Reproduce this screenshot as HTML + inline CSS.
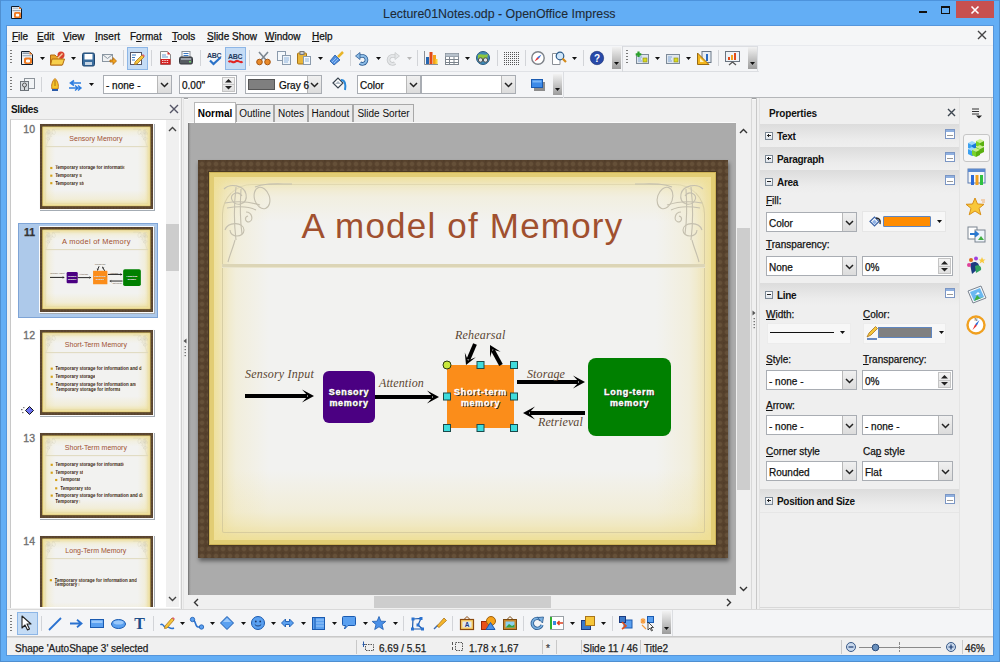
<!DOCTYPE html><html><head><meta charset="utf-8"><style>
html,body{margin:0;padding:0;width:1000px;height:662px;overflow:hidden;font-family:"Liberation Sans",sans-serif}
.a{position:absolute}
.t{white-space:nowrap;line-height:1;-webkit-text-stroke:0.25px currentColor}
svg.a{overflow:visible}
</style></head><body>
<div class="a " style="left:0px;top:0px;width:1000px;height:662px;background:#63aef5"></div>
<div class="a " style="left:0px;top:0px;width:1000px;height:1px;background:#4d93dc"></div>
<div class="a " style="left:0px;top:0px;width:1px;height:662px;background:#4f8fd0"></div>
<div class="a " style="left:999px;top:0px;width:1px;height:662px;background:#4f8fd0"></div>
<div class="a " style="left:0px;top:661px;width:1000px;height:1px;background:#4f8fd0"></div>
<div class="a " style="left:6px;top:25px;width:988px;height:631px;background:#5596dc"></div>
<svg class="a" style="left:11px;top:6px;" width="11" height="13" viewBox="0 0 11 13"><path d="M0.5 0.5 H8 L10.5 3 V12.5 H0.5 Z" fill="#eef2f6" stroke="#0e1a2a" stroke-width="1"/><rect x="1.5" y="1.5" width="6" height="1.5" fill="#b8c4d0"/><rect x="1.5" y="4" width="8" height="1.2" fill="#9aa8b8"/><path d="M8 0.5 L10.5 3 H8Z" fill="#f07b22"/><rect x="3" y="6" width="7" height="6" rx="1.5" fill="#f07b22"/><rect x="4.8" y="7.7" width="3.4" height="2.8" rx="1" fill="#fff"/></svg>
<div class="a t " style="left:383px;top:7.7px;font-size:12.4px;color:#1e2a36;-webkit-text-stroke:0.1px currentColor">Lecture01Notes.odp - OpenOffice Impress</div>
<div class="a " style="left:919px;top:11px;width:8px;height:2px;background:#111"></div>
<div class="a " style="left:941px;top:6px;width:9px;height:8px;border:1px solid #111;border-top-width:2px;box-sizing:border-box"></div>
<div class="a " style="left:956px;top:1px;width:38px;height:17px;background:#c75050"></div>
<svg class="a" style="left:970px;top:4px;" width="10" height="11" viewBox="0 0 10 11"><path d="M1.5 2.5 L8.5 9.5 M8.5 2.5 L1.5 9.5" stroke="#fff" stroke-width="1.6"/></svg>
<div class="a " style="left:7px;top:26px;width:986px;height:629px;background:#f0f0f0"></div>
<div class="a " style="left:7px;top:26px;width:986px;height:19px;background:#f5f6f7"></div>
<div class="a t " style="left:12px;top:32px;font-size:10px;color:#111;"><u>F</u>ile</div>
<div class="a t " style="left:37px;top:32px;font-size:10px;color:#111;"><u>E</u>dit</div>
<div class="a t " style="left:63px;top:32px;font-size:10px;color:#111;"><u>V</u>iew</div>
<div class="a t " style="left:95px;top:32px;font-size:10px;color:#111;"><u>I</u>nsert</div>
<div class="a t " style="left:130px;top:32px;font-size:10px;color:#111;">F<u>o</u>rmat</div>
<div class="a t " style="left:172px;top:32px;font-size:10px;color:#111;"><u>T</u>ools</div>
<div class="a t " style="left:207px;top:32px;font-size:10px;color:#111;"><u>S</u>lide Show</div>
<div class="a t " style="left:265px;top:32px;font-size:10px;color:#111;"><u>W</u>indow</div>
<div class="a t " style="left:312px;top:32px;font-size:10px;color:#111;"><u>H</u>elp</div>
<svg class="a" style="left:977px;top:30px;" width="10" height="10" viewBox="0 0 10 10"><path d="M1 1 L9 9 M9 1 L1 9" stroke="#444" stroke-width="1.4"/></svg>
<div class="a " style="left:7px;top:45px;width:986px;height:53px;background:#f4f5f7"></div>
<div class="a " style="left:7px;top:71px;width:752px;height:1px;background:#e0e2e6"></div>
<div class="a " style="left:7px;top:45px;width:986px;height:1px;background:#e8eaee"></div>
<div class="a " style="left:7px;top:97px;width:986px;height:1px;background:#b4b6b9"></div>
<div class="a " style="left:7px;top:98px;width:986px;height:1px;background:#a0a2a5"></div>
<div class="a " style="left:7px;top:99px;width:986px;height:1px;background:#fbfbfb"></div>
<div class="a" style="left:10px;top:50px;width:2px;height:1px;background:#7a7a7a"></div><div class="a" style="left:10px;top:53px;width:2px;height:1px;background:#7a7a7a"></div><div class="a" style="left:10px;top:56px;width:2px;height:1px;background:#7a7a7a"></div><div class="a" style="left:10px;top:59px;width:2px;height:1px;background:#7a7a7a"></div><div class="a" style="left:10px;top:62px;width:2px;height:1px;background:#7a7a7a"></div>
<svg class="a" style="left:40px;top:57px" width="5" height="3" viewBox="0 0 5 3"><path d="M0 0 H5 L2.5 3 Z" fill="#111"/></svg>
<svg class="a" style="left:71px;top:57px" width="5" height="3" viewBox="0 0 5 3"><path d="M0 0 H5 L2.5 3 Z" fill="#111"/></svg>
<div class="a" style="left:123px;top:50px;width:1px;height:16px;background:#d2d4d8"></div>
<div class="a" style="left:127px;top:47px;width:21px;height:23px;background:#c5dcf5;border:1px solid #8db6e6;box-sizing:border-box"></div>
<div class="a" style="left:151px;top:50px;width:1px;height:16px;background:#d2d4d8"></div>
<div class="a" style="left:200px;top:50px;width:1px;height:16px;background:#d2d4d8"></div>
<div class="a" style="left:225px;top:47px;width:21px;height:23px;background:#c5dcf5;border:1px solid #8db6e6;box-sizing:border-box"></div>
<div class="a" style="left:249px;top:50px;width:1px;height:16px;background:#d2d4d8"></div>
<svg class="a" style="left:318px;top:57px" width="5" height="3" viewBox="0 0 5 3"><path d="M0 0 H5 L2.5 3 Z" fill="#111"/></svg>
<div class="a" style="left:350px;top:50px;width:1px;height:16px;background:#d2d4d8"></div>
<svg class="a" style="left:376px;top:57px" width="5" height="3" viewBox="0 0 5 3"><path d="M0 0 H5 L2.5 3 Z" fill="#111"/></svg>
<svg class="a" style="left:407px;top:57px" width="5" height="3" viewBox="0 0 5 3"><path d="M0 0 H5 L2.5 3 Z" fill="#b8b8b8"/></svg>
<div class="a" style="left:417px;top:50px;width:1px;height:16px;background:#d2d4d8"></div>
<svg class="a" style="left:465px;top:57px" width="5" height="3" viewBox="0 0 5 3"><path d="M0 0 H5 L2.5 3 Z" fill="#111"/></svg>
<div class="a" style="left:497px;top:50px;width:1px;height:16px;background:#d2d4d8"></div>
<div class="a" style="left:525px;top:50px;width:1px;height:16px;background:#d2d4d8"></div>
<svg class="a" style="left:572px;top:57px" width="5" height="3" viewBox="0 0 5 3"><path d="M0 0 H5 L2.5 3 Z" fill="#111"/></svg>
<div class="a" style="left:583px;top:50px;width:1px;height:16px;background:#d2d4d8"></div>
<svg class="a" style="left:21px;top:51px" width="16" height="16" viewBox="0 0 16 16"><path d="M0.5 0.5 H8.5 L11.5 3.5 V13.5 H0.5 Z" fill="#eef2f6" stroke="#14202e" stroke-width="1"/><rect x="1.5" y="1.5" width="7" height="1.5" fill="#8e9cac"/><rect x="1.5" y="4" width="9" height="1.3" fill="#a8b4c0"/><path d="M8.5 0.5 L11.5 3.5 H8.5Z" fill="#f07b22"/><rect x="3" y="6.5" width="8" height="6.5" rx="1.8" fill="#f07b22"/><rect x="5" y="8.4" width="4" height="3" rx="1.2" fill="#fff"/></svg>
<svg class="a" style="left:50px;top:51px" width="16" height="16" viewBox="0 0 16 16"><path d="M0.5 4 H5 L6.5 5.5 H12 V14 H0.5 Z" fill="#e8a52a" stroke="#b36b12" stroke-width="1"/><path d="M2 8 H14.5 L12.5 14 H0.5 Z" fill="#f7cf4c" stroke="#b36b12" stroke-width="1"/><circle cx="11" cy="4" r="3.5" fill="#d9412e"/><path d="M8 7 L12.5 2.5" stroke="#f5d0a0" stroke-width="1.5"/></svg>
<svg class="a" style="left:82px;top:52px" width="16" height="16" viewBox="0 0 16 16"><rect x="0.5" y="1" width="12" height="13" rx="1.5" fill="#3a6d9e" stroke="#1f4670"/><rect x="2.5" y="2" width="8" height="5.5" fill="#fff"/><rect x="3" y="10" width="7" height="3" fill="#c8d6e4"/></svg>
<svg class="a" style="left:102px;top:52px" width="16" height="16" viewBox="0 0 16 16"><rect x="0.5" y="2.5" width="10" height="7" fill="#eef0f2" stroke="#8a96a2"/><path d="M0.5 2.5 L5.5 6.5 L10.5 2.5" fill="none" stroke="#8a96a2"/><path d="M8 8 H11 V5.5 L14.5 9 L11 12.5 V10 H8 Z" fill="#f2a21c" stroke="#b06a10" stroke-width="0.8"/></svg>
<svg class="a" style="left:130px;top:51px" width="16" height="16" viewBox="0 0 16 16"><rect x="0.5" y="1.5" width="11" height="12" fill="#fff" stroke="#556" stroke-width="1"/><path d="M2 4 H6 M2 6.5 H5 M2 9 H5" stroke="#3a78c2" stroke-width="1"/><path d="M5 11 L12 4 L14 6 L7 13 L4.5 13.5 Z" fill="#f6c63a" stroke="#a9741a" stroke-width="0.8"/><path d="M12 4 L13 3 L15 5 L14 6 Z" fill="#e06070"/></svg>
<svg class="a" style="left:160px;top:51px" width="16" height="16" viewBox="0 0 16 16"><path d="M0.5 0.5 H7.5 L10.5 3.5 V13.5 H0.5 Z" fill="#fafafa" stroke="#8a8a8a"/><path d="M2 4 H6 M2 6 H8" stroke="#6b9bd0" stroke-width="1"/><rect x="0.5" y="8" width="10" height="5.5" fill="#d42020"/><path d="M2 9.5 H9 M2 11.5 H9" stroke="#fff" stroke-width="0.8" stroke-dasharray="1.5 0.8"/><path d="M7.5 0.5 L10.5 3.5 H7.5Z" fill="#e03030"/></svg>
<svg class="a" style="left:179px;top:51px" width="16" height="16" viewBox="0 0 16 16"><rect x="3" y="0.5" width="8" height="6" fill="#fff" stroke="#8a8f96"/><path d="M4.5 2.5 H9.5 M4.5 4.5 H9.5" stroke="#3a78c2"/><rect x="0.5" y="6" width="13" height="7" rx="1.5" fill="#565b62" stroke="#33373c"/><rect x="2" y="7" width="10" height="2" fill="#9aa0a8"/><rect x="10" y="10" width="2" height="1.5" fill="#6fd06a"/></svg>
<svg class="a" style="left:207px;top:51px" width="16" height="16" viewBox="0 0 16 16"><text x="0" y="6.5" font-family="Liberation Sans" font-weight="bold" font-size="7" fill="#1f3a60" letter-spacing="-0.3">ABC</text><path d="M3 9.5 L6.5 13 L13.5 6.5" fill="none" stroke="#2a72c8" stroke-width="2.2"/></svg>
<svg class="a" style="left:228px;top:50px" width="16" height="16" viewBox="0 0 16 16"><text x="0" y="8.5" font-family="Liberation Sans" font-weight="bold" font-size="7" fill="#1f3a60" letter-spacing="-0.3">ABC</text><path d="M0.5 12 C 3 9.5, 5 14, 7.5 11.5 C 10 9, 12 14, 14.5 11.5" fill="none" stroke="#e02424" stroke-width="2"/></svg>
<svg class="a" style="left:256px;top:51px" width="16" height="16" viewBox="0 0 16 16"><path d="M3 1 L10 9 M12 1 L5 9" stroke="#7c8690" stroke-width="1.6"/><circle cx="3.5" cy="11" r="2.8" fill="#e98a2a" stroke="#a65612"/><circle cx="11.5" cy="11" r="2.8" fill="#e98a2a" stroke="#a65612"/></svg>
<svg class="a" style="left:277px;top:51px" width="16" height="16" viewBox="0 0 16 16"><rect x="0.5" y="0.5" width="8" height="9" fill="#f4f8fc" stroke="#8a9aac"/><rect x="5.5" y="4.5" width="8" height="9" fill="#eef4fa" stroke="#8a9aac"/><path d="M7 7 H12 M7 9 H12 M7 11 H11" stroke="#7aa6d6" stroke-width="0.8"/></svg>
<svg class="a" style="left:297px;top:51px" width="16" height="16" viewBox="0 0 16 16"><rect x="0.5" y="2" width="9" height="11" rx="1" fill="#e9b53a" stroke="#a77418"/><rect x="3" y="0.5" width="4" height="3" fill="#c8ccd2" stroke="#777"/><rect x="6.5" y="5.5" width="7" height="8" fill="#f4f8fc" stroke="#8a9aac"/><path d="M8 8 H12 M8 10 H12" stroke="#7aa6d6" stroke-width="0.8"/></svg>
<svg class="a" style="left:329px;top:51px" width="16" height="16" viewBox="0 0 16 16"><path d="M9 6 L14 1" stroke="#e8b52a" stroke-width="2.5"/><path d="M1 10 L6 4 L11 9 L5 14 Z" fill="#4f8ee0" stroke="#245aa0" stroke-width="0.8"/><path d="M3 11 L7 7 M5 12 L9 8" stroke="#a8cdf5" stroke-width="0.8"/></svg>
<svg class="a" style="left:355px;top:52px" width="16" height="16" viewBox="0 0 16 16"><path d="M4 4 H8.5 A 4 4 0 1 1 5 11" fill="none" stroke="#2e5d94" stroke-width="3.6"/><path d="M4 4 H8.5 A 4 4 0 1 1 5 11" fill="none" stroke="#8cbce6" stroke-width="2"/><path d="M0.5 4 L5 0.5 V7.5 Z" fill="#8cbce6" stroke="#2e5d94" stroke-width="0.8"/></svg>
<svg class="a" style="left:386px;top:52px" width="16" height="16" viewBox="0 0 16 16"><path d="M10 4 H5.5 A 4 4 0 1 0 9 11" fill="none" stroke="#c8cacc" stroke-width="3.6"/><path d="M10 4 H5.5 A 4 4 0 1 0 9 11" fill="none" stroke="#e4e6e8" stroke-width="2"/><path d="M13.5 4 L9 0.5 V7.5 Z" fill="#e4e6e8" stroke="#c8cacc" stroke-width="0.8"/></svg>
<svg class="a" style="left:424px;top:51px" width="16" height="16" viewBox="0 0 16 16"><path d="M0.5 0 V13.5 H14" fill="none" stroke="#8a8f96"/><rect x="2" y="6" width="3" height="7" fill="#2566b0"/><rect x="5.5" y="1" width="3" height="12" fill="#e24a1a"/><rect x="9" y="4" width="3" height="9" fill="#f5a21a"/><rect x="11.5" y="8" width="2" height="5" fill="#f6d43a"/></svg>
<svg class="a" style="left:445px;top:53px" width="16" height="16" viewBox="0 0 16 16"><rect x="0.5" y="0.5" width="13" height="11" fill="#fff" stroke="#7d858e"/><path d="M0.5 3.5 H13.5 M0.5 6.5 H13.5 M0.5 9.5 H13.5 M4.5 0.5 V11.5 M9 0.5 V11.5" stroke="#7d858e"/><rect x="0.5" y="0.5" width="13" height="3" fill="#b8c2cc"/></svg>
<svg class="a" style="left:476px;top:51px" width="16" height="16" viewBox="0 0 16 16"><circle cx="7" cy="7" r="6.5" fill="#3f8bb8" stroke="#2a5a80"/><path d="M2 4 C 5 2, 8 5, 12 3 L 11 8 C 8 9, 5 7, 2 9 Z" fill="#8cc63e"/><circle cx="4.5" cy="9" r="2.2" fill="#dfe4e8" stroke="#444" stroke-width="0.9"/><circle cx="9.5" cy="9" r="2.2" fill="#dfe4e8" stroke="#444" stroke-width="0.9"/></svg>
<svg class="a" style="left:503px;top:51px" width="16" height="16" viewBox="0 0 16 16"><rect x="1" y="1" width="1" height="1" fill="#555"/><rect x="1" y="3" width="1" height="1" fill="#555"/><rect x="1" y="5" width="1" height="1" fill="#555"/><rect x="1" y="7" width="1" height="1" fill="#555"/><rect x="1" y="9" width="1" height="1" fill="#555"/><rect x="1" y="11" width="1" height="1" fill="#555"/><rect x="1" y="13" width="1" height="1" fill="#555"/><rect x="3" y="1" width="1" height="1" fill="#555"/><rect x="3" y="3" width="1" height="1" fill="#555"/><rect x="3" y="5" width="1" height="1" fill="#555"/><rect x="3" y="7" width="1" height="1" fill="#555"/><rect x="3" y="9" width="1" height="1" fill="#555"/><rect x="3" y="11" width="1" height="1" fill="#555"/><rect x="3" y="13" width="1" height="1" fill="#555"/><rect x="5" y="1" width="1" height="1" fill="#555"/><rect x="5" y="3" width="1" height="1" fill="#555"/><rect x="5" y="5" width="1" height="1" fill="#555"/><rect x="5" y="7" width="1" height="1" fill="#555"/><rect x="5" y="9" width="1" height="1" fill="#555"/><rect x="5" y="11" width="1" height="1" fill="#555"/><rect x="5" y="13" width="1" height="1" fill="#555"/><rect x="7" y="1" width="1" height="1" fill="#555"/><rect x="7" y="3" width="1" height="1" fill="#555"/><rect x="7" y="5" width="1" height="1" fill="#555"/><rect x="7" y="7" width="1" height="1" fill="#555"/><rect x="7" y="9" width="1" height="1" fill="#555"/><rect x="7" y="11" width="1" height="1" fill="#555"/><rect x="7" y="13" width="1" height="1" fill="#555"/><rect x="9" y="1" width="1" height="1" fill="#555"/><rect x="9" y="3" width="1" height="1" fill="#555"/><rect x="9" y="5" width="1" height="1" fill="#555"/><rect x="9" y="7" width="1" height="1" fill="#555"/><rect x="9" y="9" width="1" height="1" fill="#555"/><rect x="9" y="11" width="1" height="1" fill="#555"/><rect x="9" y="13" width="1" height="1" fill="#555"/><rect x="11" y="1" width="1" height="1" fill="#555"/><rect x="11" y="3" width="1" height="1" fill="#555"/><rect x="11" y="5" width="1" height="1" fill="#555"/><rect x="11" y="7" width="1" height="1" fill="#555"/><rect x="11" y="9" width="1" height="1" fill="#555"/><rect x="11" y="11" width="1" height="1" fill="#555"/><rect x="11" y="13" width="1" height="1" fill="#555"/><rect x="13" y="1" width="1" height="1" fill="#555"/><rect x="13" y="3" width="1" height="1" fill="#555"/><rect x="13" y="5" width="1" height="1" fill="#555"/><rect x="13" y="7" width="1" height="1" fill="#555"/><rect x="13" y="9" width="1" height="1" fill="#555"/><rect x="13" y="11" width="1" height="1" fill="#555"/><rect x="13" y="13" width="1" height="1" fill="#555"/><rect x="15" y="1" width="1" height="1" fill="#555"/><rect x="15" y="3" width="1" height="1" fill="#555"/><rect x="15" y="5" width="1" height="1" fill="#555"/><rect x="15" y="7" width="1" height="1" fill="#555"/><rect x="15" y="9" width="1" height="1" fill="#555"/><rect x="15" y="11" width="1" height="1" fill="#555"/><rect x="15" y="13" width="1" height="1" fill="#555"/></svg>
<svg class="a" style="left:531px;top:51px" width="16" height="16" viewBox="0 0 16 16"><circle cx="7" cy="7" r="6.2" fill="#fff" stroke="#7d8288" stroke-width="1.4"/><path d="M10.5 3.5 L7.8 7.8 L6.2 6.2 Z" fill="#3a6ed8"/><path d="M3.5 10.5 L6.2 6.2 L7.8 7.8 Z" fill="#e83030"/></svg>
<svg class="a" style="left:552px;top:51px" width="16" height="16" viewBox="0 0 16 16"><path d="M0.5 2.5 H6 L8 4.5 V13.5 H0.5 Z" fill="#fff" stroke="#8a8f96"/><circle cx="8" cy="5" r="3.8" fill="#cfe6fa" stroke="#2a5a8a" stroke-width="1.2"/><path d="M10.5 7.5 L14 11" stroke="#d48a1a" stroke-width="2.2"/></svg>
<svg class="a" style="left:590px;top:51px" width="16" height="16" viewBox="0 0 16 16"><circle cx="7" cy="7" r="6.7" fill="#2849a8" stroke="#1a2e70" stroke-width="0.6"/><text x="7" y="11" text-anchor="middle" font-family="Liberation Sans" font-weight="bold" font-size="10" fill="#fff">?</text></svg>
<div class="a" style="left:612px;top:47px;width:9px;height:22px;background:linear-gradient(#f2f2f2,#9c9c9c)"></div><svg class="a" style="left:614px;top:62px" width="5" height="3" viewBox="0 0 5 3"><path d="M0 0 H5 L2.5 3 Z" fill="#111"/></svg>
<div class="a " style="left:622px;top:46px;width:1px;height:26px;background:#d6d8dc"></div>
<div class="a " style="left:623px;top:46px;width:135px;height:26px;border:1px solid #dcdee2;border-left:none;box-sizing:border-box"></div>
<div class="a" style="left:626px;top:50px;width:2px;height:1px;background:#7a7a7a"></div><div class="a" style="left:626px;top:53px;width:2px;height:1px;background:#7a7a7a"></div><div class="a" style="left:626px;top:56px;width:2px;height:1px;background:#7a7a7a"></div><div class="a" style="left:626px;top:59px;width:2px;height:1px;background:#7a7a7a"></div><div class="a" style="left:626px;top:62px;width:2px;height:1px;background:#7a7a7a"></div>
<svg class="a" style="left:635px;top:51px" width="16" height="16" viewBox="0 0 16 16"><rect x="1.5" y="3.5" width="12" height="9" fill="#dfe6ee" stroke="#7d8a98"/><path d="M3 6 H7 M3 8 H6 M3 10 H7" stroke="#6a9ad0" stroke-width="0.8"/><rect x="8" y="7" width="4" height="4" fill="#d8d820" stroke="#8a8a10" stroke-width="0.6"/><path d="M3.5 0.5 V6 M0.7 3.3 H6.3" stroke="#2aa02a" stroke-width="2.2"/></svg>
<svg class="a" style="left:666px;top:52px" width="16" height="16" viewBox="0 0 16 16"><rect x="0.5" y="2.5" width="13" height="9" fill="#dfe6ee" stroke="#7d8a98"/><path d="M2 5 H6 M2 7 H5 M2 9 H6" stroke="#6a9ad0" stroke-width="0.8"/><rect x="8" y="6" width="4" height="4" fill="#d8d820" stroke="#8a8a10" stroke-width="0.6"/></svg>
<svg class="a" style="left:697px;top:51px" width="16" height="16" viewBox="0 0 16 16"><rect x="5" y="0.5" width="9" height="11" fill="#e8eef4" stroke="#6a7888"/><rect x="9" y="3" width="2" height="7" fill="#2a6ac0"/><path d="M0.5 2 L0.5 13.5 L12 13.5 Z" fill="#f3b61c" stroke="#9a6a10"/><path d="M3 7 L3 11 L7 11 Z" fill="#fff3c0"/></svg>
<svg class="a" style="left:725px;top:51px" width="16" height="16" viewBox="0 0 16 16"><rect x="0.5" y="0.5" width="14" height="10" fill="#eef2f6" stroke="#6a7480"/><rect x="3" y="6" width="2" height="3" fill="#e24a1a"/><rect x="6" y="4" width="2" height="5" fill="#f5a21a"/><rect x="9" y="2" width="2" height="7" fill="#e24a1a"/><path d="M7.5 11 L4 14 M7.5 11 L11 14" stroke="#555" stroke-width="1.2"/></svg>
<svg class="a" style="left:655px;top:57px" width="5" height="3" viewBox="0 0 5 3"><path d="M0 0 H5 L2.5 3 Z" fill="#111"/></svg>
<svg class="a" style="left:686px;top:57px" width="5" height="3" viewBox="0 0 5 3"><path d="M0 0 H5 L2.5 3 Z" fill="#111"/></svg>
<div class="a" style="left:718px;top:50px;width:1px;height:16px;background:#d2d4d8"></div>
<div class="a" style="left:748px;top:47px;width:9px;height:22px;background:linear-gradient(#f2f2f2,#9c9c9c)"></div><svg class="a" style="left:750px;top:62px" width="5" height="3" viewBox="0 0 5 3"><path d="M0 0 H5 L2.5 3 Z" fill="#111"/></svg>
<div class="a" style="left:10px;top:77px;width:2px;height:1px;background:#7a7a7a"></div><div class="a" style="left:10px;top:80px;width:2px;height:1px;background:#7a7a7a"></div><div class="a" style="left:10px;top:83px;width:2px;height:1px;background:#7a7a7a"></div><div class="a" style="left:10px;top:86px;width:2px;height:1px;background:#7a7a7a"></div><div class="a" style="left:10px;top:89px;width:2px;height:1px;background:#7a7a7a"></div>
<svg class="a" style="left:20px;top:78px" width="16" height="16" viewBox="0 0 16 16"><rect x="4.5" y="0.5" width="10" height="10" fill="#f2f4f6" stroke="#8d939a"/><rect x="0.5" y="3.5" width="8" height="9" fill="#d6dade" stroke="#6e747a"/><circle cx="4.5" cy="7" r="2" fill="none" stroke="#555"/><path d="M4.5 9 V12" stroke="#555"/></svg>
<div class="a" style="left:41px;top:77px;width:1px;height:15px;background:#d2d4d8"></div>
<svg class="a" style="left:51px;top:78px" width="16" height="16" viewBox="0 0 16 16"><path d="M4 0.5 C 7 3, 8 8, 7 11 H1 C 0 8, 1 3, 4 0.5 Z" fill="#f4c52a" stroke="#c06a10" stroke-width="0.9"/><path d="M4 2 V8" stroke="#a05a10" stroke-width="0.8"/><rect x="1" y="11" width="6" height="2" fill="#2a5aa8"/></svg>
<svg class="a" style="left:69px;top:80px" width="16" height="16" viewBox="0 0 16 16"><path d="M12 3 H2 M5 0.5 L1.5 3 L5 5.5" fill="none" stroke="#2d7de0" stroke-width="1.6"/><path d="M0 8 H12 M9 5.5 L12 8 L9 10.5 M6 5.5 L9 8 L6 10.5" fill="none" stroke="#2d7de0" stroke-width="1.4"/></svg>
<svg class="a" style="left:89px;top:83px" width="5" height="3" viewBox="0 0 5 3"><path d="M0 0 H5 L2.5 3 Z" fill="#111"/></svg>
<div class="a " style="left:103px;top:75px;width:69px;height:19px;background:#fff;border:1px solid #a9adb3;box-sizing:border-box"></div>
<div class="a " style="left:157px;top:76px;width:14px;height:17px;background:linear-gradient(#f0f0f0,#dcdcdc);border-left:1px solid #b8b8b8;box-sizing:border-box"></div>
<svg class="a" style="left:160px;top:82px" width="9" height="6" viewBox="0 0 9 6"><path d="M1 1 L4.5 4.5 L8 1" fill="none" stroke="#222" stroke-width="1.5"/></svg>
<div class="a t " style="left:106px;top:81px;font-size:10px;color:#111;">- none -</div>
<div class="a " style="left:179px;top:75px;width:58px;height:19px;background:#fff;border:1px solid #a9adb3;box-sizing:border-box"></div>
<div class="a " style="left:222px;top:77px;width:13px;height:15px;background:linear-gradient(#f4f4f4,#e0e0e0);border:1px solid #c4c4c4;box-sizing:border-box"></div>
<div class="a " style="left:223px;top:84px;width:11px;height:1px;background:#c4c4c4"></div>
<svg class="a" style="left:225px;top:79px" width="7" height="4" viewBox="0 0 7 4"><path d="M0 3.5 L3.5 0 L7 3.5 Z" fill="#222"/></svg>
<svg class="a" style="left:225px;top:86px" width="7" height="4" viewBox="0 0 7 4"><path d="M0 0 L7 0 L3.5 3.5 Z" fill="#222"/></svg>
<div class="a t " style="left:182px;top:81px;font-size:10px;color:#111">0.00&quot;</div>
<div class="a " style="left:245px;top:75px;width:77px;height:19px;background:#fff;border:1px solid #a9adb3;box-sizing:border-box"></div>
<div class="a " style="left:307px;top:76px;width:14px;height:17px;background:linear-gradient(#f0f0f0,#dcdcdc);border-left:1px solid #b8b8b8;box-sizing:border-box"></div>
<svg class="a" style="left:310px;top:82px" width="9" height="6" viewBox="0 0 9 6"><path d="M1 1 L4.5 4.5 L8 1" fill="none" stroke="#222" stroke-width="1.5"/></svg>
<div class="a " style="left:248px;top:79px;width:27px;height:11px;background:#7f7f7f;border:1px solid #555;box-sizing:border-box"></div>
<div class="a t " style="left:279px;top:81px;font-size:10px;color:#111">Gray 6</div>
<svg class="a" style="left:332px;top:77px" width="16" height="16" viewBox="0 0 16 16"><path d="M1 6 L6 1 L11 6 L6 11 Z" fill="#fff" stroke="#394450" stroke-width="1.2"/><path d="M3 7 L6 4 L9 7" fill="#b0bac4"/><path d="M9 3 C 13 3, 14 7, 13 13" fill="none" stroke="#2a88d8" stroke-width="2"/></svg>
<div class="a " style="left:357px;top:75px;width:64px;height:19px;background:#fff;border:1px solid #a9adb3;box-sizing:border-box"></div>
<div class="a " style="left:406px;top:76px;width:14px;height:17px;background:linear-gradient(#f0f0f0,#dcdcdc);border-left:1px solid #b8b8b8;box-sizing:border-box"></div>
<svg class="a" style="left:409px;top:82px" width="9" height="6" viewBox="0 0 9 6"><path d="M1 1 L4.5 4.5 L8 1" fill="none" stroke="#222" stroke-width="1.5"/></svg>
<div class="a t " style="left:360px;top:81px;font-size:10px;color:#111;">Color</div>
<div class="a " style="left:421px;top:75px;width:95px;height:19px;background:#fff;border:1px solid #a9adb3;box-sizing:border-box"></div>
<div class="a " style="left:501px;top:76px;width:14px;height:17px;background:linear-gradient(#f0f0f0,#dcdcdc);border-left:1px solid #b8b8b8;box-sizing:border-box"></div>
<svg class="a" style="left:504px;top:82px" width="9" height="6" viewBox="0 0 9 6"><path d="M1 1 L4.5 4.5 L8 1" fill="none" stroke="#222" stroke-width="1.5"/></svg>
<svg class="a" style="left:531px;top:79px" width="16" height="16" viewBox="0 0 16 16"><rect x="3" y="3" width="11" height="9" fill="#8c8c8c"/><rect x="0.5" y="0.5" width="11" height="8" fill="#3c8ae8" stroke="#1a5ab0"/><rect x="1.5" y="1.5" width="9" height="2" fill="#7ab6f6"/></svg>
<div class="a" style="left:553px;top:74px;width:9px;height:21px;background:linear-gradient(#f2f2f2,#9c9c9c)"></div><svg class="a" style="left:555px;top:88px" width="5" height="3" viewBox="0 0 5 3"><path d="M0 0 H5 L2.5 3 Z" fill="#111"/></svg>
<div class="a " style="left:563px;top:72px;width:1px;height:26px;background:#dcdee2"></div>
<div class="a " style="left:7px;top:98px;width:176px;height:511px;background:#f0f0f0"></div>
<div class="a t " style="left:11px;top:104.7px;font-size:10px;font-weight:bold;color:#111;-webkit-text-stroke:0;letter-spacing:-0.4px">Slides</div>
<svg class="a" style="left:169px;top:104px;" width="10" height="10" viewBox="0 0 10 10"><path d="M1 1 L9 9 M9 1 L1 9" stroke="#556" stroke-width="1.4"/></svg>
<div class="a " style="left:10px;top:119px;width:170px;height:489px;background:#fff;border-left:1px solid #c8c8c8;border-top:1px solid #d8d8d8;box-sizing:border-box"></div>
<div class="a " style="left:166px;top:120px;width:13px;height:487px;background:#f0f0f0"></div>
<div class="a " style="left:166px;top:224px;width:13px;height:47px;background:#cdcdcd"></div>
<svg class="a" style="left:168px;top:126px;" width="9" height="6" viewBox="0 0 9 6"><path d="M1 5 L4.5 1.5 L8 5" stroke="#444" stroke-width="1.4" fill="none"/></svg>
<svg class="a" style="left:168px;top:596px;" width="9" height="6" viewBox="0 0 9 6"><path d="M1 1 L4.5 4.5 L8 1" stroke="#444" stroke-width="1.4" fill="none"/></svg>
<div class="a" style="left:10px;top:120px;width:156px;height:487px;overflow:hidden"><div class="a" style="left:-10px;top:-120px;width:200px;height:700px"><div class="a t" style="left:20px;top:123.5px;font-size:10.5px;-webkit-text-stroke:0.35px #707070;color:#707070;width:15px;text-align:right">10</div><div class="a" style="left:40px;top:124px;width:115px;height:87px;background:#a4acb4"></div><div class="a" style="left:39px;top:123px;width:115px;height:87px;background:#fbfbfb"></div><div class="a" style="left:40px;top:124px;width:113px;height:85px;overflow:hidden"><div style="position:absolute;left:0;top:0;width:530px;height:398px;transform:scale(0.2132,0.2136);transform-origin:0 0"><div style="position:absolute;left:0;top:0;width:530px;height:398px;background-color:#56412c;background-image:radial-gradient(circle at 4px 4px,#655039 1.5px,rgba(0,0,0,0) 3px),radial-gradient(circle at 0 0,#503d29 1.5px,rgba(0,0,0,0) 2.5px);background-size:7px 7px;"></div><div style="position:absolute;left:11px;top:12px;width:507px;height:373px;background:#cfb458;box-shadow:0 0 0 1px #4a3922;"></div><div style="position:absolute;left:12px;top:13px;width:505px;height:371px;background:#e2cd74;"></div><div style="position:absolute;left:16px;top:17px;width:497px;height:363px;background-color:#f2f2f0;background-image:linear-gradient(to top,rgba(238,222,148,0.8),rgba(240,226,160,0.3) 28px,rgba(240,226,160,0) 70px),linear-gradient(to right,rgba(238,222,148,0.7),rgba(240,226,160,0.25) 22px,rgba(240,226,160,0) 55px),linear-gradient(to left,rgba(238,222,148,0.7),rgba(240,226,160,0.25) 22px,rgba(240,226,160,0) 55px),linear-gradient(to bottom,rgba(238,222,148,0.6),rgba(240,226,160,0.2) 20px,rgba(240,226,160,0) 45px);box-shadow:inset 0 0 10px 3px rgba(238,222,148,0.85)"></div><div style="position:absolute;left:24px;top:24px;width:483px;height:349px;border:1px solid rgba(200,190,150,0.6);border-top-color:rgba(200,190,150,0.35);border-radius:30px 30px 2px 2px;box-sizing:border-box"></div><div style="position:absolute;left:24px;top:104px;width:483px;height:3px;background:#dcd5b6;border-bottom:1px solid #e9e4cc"></div><svg style="position:absolute;left:0;top:0" width="530" height="398" viewBox="0 0 530 398"><g transform="translate(24,24)"><g fill="none" stroke="#c4bfae" stroke-width="1.1"><ellipse cx="40" cy="14" rx="7.5" ry="11" transform="rotate(-18 40 14)"/><path d="M2 5 C 8 -1, 22 1, 24 10 C 26 20, 14 24, 10 16 C 7 10, 16 6, 20 12"/><path d="M3 19 C 14 17, 26 17, 38 21"/><path d="M5 24 C 16 22, 26 22, 34 26"/><path d="M14 3 C 12 20, 12 40, 14 56"/><path d="M19 5 C 18 20, 18 36, 20 50"/><path d="M3 46 C 6 37, 22 38, 22 46 C 22 54, 8 54, 8 46"/><path d="M13 56 C 11 64, 8 70, 6 78"/><path d="M24 28 C 30 28, 32 36, 27 38 C 23 38, 22 33, 26 32"/><path d="M33 3 C 42 -1, 52 0, 70 0"/></g></g><g transform="translate(507,24) scale(-1,1)"><g fill="none" stroke="#c4bfae" stroke-width="1.1"><ellipse cx="40" cy="14" rx="7.5" ry="11" transform="rotate(-18 40 14)"/><path d="M2 5 C 8 -1, 22 1, 24 10 C 26 20, 14 24, 10 16 C 7 10, 16 6, 20 12"/><path d="M3 19 C 14 17, 26 17, 38 21"/><path d="M5 24 C 16 22, 26 22, 34 26"/><path d="M14 3 C 12 20, 12 40, 14 56"/><path d="M19 5 C 18 20, 18 36, 20 50"/><path d="M3 46 C 6 37, 22 38, 22 46 C 22 54, 8 54, 8 46"/><path d="M13 56 C 11 64, 8 70, 6 78"/><path d="M24 28 C 30 28, 32 36, 27 38 C 23 38, 22 33, 26 32"/><path d="M33 3 C 42 -1, 52 0, 70 0"/></g></g></svg><div style="position:absolute;left:136.0px;top:50px;width:252px;text-align:center;font-family:'Liberation Sans',sans-serif;font-size:33px;line-height:1;color:#a0502f;white-space:nowrap">Sensory Memory</div><div style="position:absolute;left:71px;top:194px;width:325px;height:24px;overflow:hidden;font-family:'Liberation Sans',sans-serif;font-weight:bold;font-size:21px;line-height:24px;color:#3a2812;white-space:nowrap">Temporary storage for information and data in the working memory system of the brain used for </div><div style="position:absolute;left:48px;top:201px;width:10px;height:10px;background:#d4a017"></div><div style="position:absolute;left:71px;top:230px;width:126px;height:24px;overflow:hidden;font-family:'Liberation Sans',sans-serif;font-weight:bold;font-size:21px;line-height:24px;color:#3a2812;white-space:nowrap">Temporary storage for information and data in the working memory system of the brain used for </div><div style="position:absolute;left:48px;top:237px;width:10px;height:10px;background:#d4a017"></div><div style="position:absolute;left:71px;top:265px;width:135px;height:24px;overflow:hidden;font-family:'Liberation Sans',sans-serif;font-weight:bold;font-size:21px;line-height:24px;color:#3a2812;white-space:nowrap">Temporary storage for information and data in the working memory system of the brain used for </div><div style="position:absolute;left:48px;top:272px;width:10px;height:10px;background:#d4a017"></div></div></div><div class="a" style="left:18px;top:223px;width:140px;height:95px;background:#adc9ea;border:1px solid #7ea4d6;box-sizing:border-box"></div><div class="a t" style="left:20px;top:226.5px;font-size:10.5px;font-weight:bold;color:#333;width:15px;text-align:right">11</div><div class="a" style="left:40px;top:227px;width:115px;height:87px;background:#a4acb4"></div><div class="a" style="left:39px;top:226px;width:115px;height:87px;background:#fbfbfb"></div><div class="a" style="left:40px;top:227px;width:113px;height:85px;overflow:hidden"><div style="position:absolute;left:0;top:0;width:530px;height:398px;transform:scale(0.2132,0.2136);transform-origin:0 0"><div style="position:absolute;left:0;top:0;width:530px;height:398px;background-color:#56412c;background-image:radial-gradient(circle at 4px 4px,#655039 1.5px,rgba(0,0,0,0) 3px),radial-gradient(circle at 0 0,#503d29 1.5px,rgba(0,0,0,0) 2.5px);background-size:7px 7px;"></div><div style="position:absolute;left:11px;top:12px;width:507px;height:373px;background:#cfb458;box-shadow:0 0 0 1px #4a3922;"></div><div style="position:absolute;left:12px;top:13px;width:505px;height:371px;background:#e2cd74;"></div><div style="position:absolute;left:16px;top:17px;width:497px;height:363px;background-color:#f2f2f0;background-image:linear-gradient(to top,rgba(238,222,148,0.8),rgba(240,226,160,0.3) 28px,rgba(240,226,160,0) 70px),linear-gradient(to right,rgba(238,222,148,0.7),rgba(240,226,160,0.25) 22px,rgba(240,226,160,0) 55px),linear-gradient(to left,rgba(238,222,148,0.7),rgba(240,226,160,0.25) 22px,rgba(240,226,160,0) 55px),linear-gradient(to bottom,rgba(238,222,148,0.6),rgba(240,226,160,0.2) 20px,rgba(240,226,160,0) 45px);box-shadow:inset 0 0 10px 3px rgba(238,222,148,0.85)"></div><div style="position:absolute;left:24px;top:24px;width:483px;height:349px;border:1px solid rgba(200,190,150,0.6);border-top-color:rgba(200,190,150,0.35);border-radius:30px 30px 2px 2px;box-sizing:border-box"></div><div style="position:absolute;left:24px;top:104px;width:483px;height:3px;background:#dcd5b6;border-bottom:1px solid #e9e4cc"></div><svg style="position:absolute;left:0;top:0" width="530" height="398" viewBox="0 0 530 398"><g transform="translate(24,24)"><g fill="none" stroke="#c4bfae" stroke-width="1.1"><ellipse cx="40" cy="14" rx="7.5" ry="11" transform="rotate(-18 40 14)"/><path d="M2 5 C 8 -1, 22 1, 24 10 C 26 20, 14 24, 10 16 C 7 10, 16 6, 20 12"/><path d="M3 19 C 14 17, 26 17, 38 21"/><path d="M5 24 C 16 22, 26 22, 34 26"/><path d="M14 3 C 12 20, 12 40, 14 56"/><path d="M19 5 C 18 20, 18 36, 20 50"/><path d="M3 46 C 6 37, 22 38, 22 46 C 22 54, 8 54, 8 46"/><path d="M13 56 C 11 64, 8 70, 6 78"/><path d="M24 28 C 30 28, 32 36, 27 38 C 23 38, 22 33, 26 32"/><path d="M33 3 C 42 -1, 52 0, 70 0"/></g></g><g transform="translate(507,24) scale(-1,1)"><g fill="none" stroke="#c4bfae" stroke-width="1.1"><ellipse cx="40" cy="14" rx="7.5" ry="11" transform="rotate(-18 40 14)"/><path d="M2 5 C 8 -1, 22 1, 24 10 C 26 20, 14 24, 10 16 C 7 10, 16 6, 20 12"/><path d="M3 19 C 14 17, 26 17, 38 21"/><path d="M5 24 C 16 22, 26 22, 34 26"/><path d="M14 3 C 12 20, 12 40, 14 56"/><path d="M19 5 C 18 20, 18 36, 20 50"/><path d="M3 46 C 6 37, 22 38, 22 46 C 22 54, 8 54, 8 46"/><path d="M13 56 C 11 64, 8 70, 6 78"/><path d="M24 28 C 30 28, 32 36, 27 38 C 23 38, 22 33, 26 32"/><path d="M33 3 C 42 -1, 52 0, 70 0"/></g></g></svg><div style="position:absolute;left:103.5px;top:48.3px;font-family:'Liberation Sans',sans-serif;font-size:35px;line-height:1;color:#a0502f;white-space:nowrap;letter-spacing:1.2px">A model of Memory</div><svg style="position:absolute;left:0;top:0;overflow:visible" width="530" height="398" viewBox="0 0 530 398"><rect x="125" y="211" width="52" height="52" rx="6" fill="#4b0082"/><rect x="249" y="205" width="67" height="63" fill="#fb8d1a"/><rect x="390" y="198" width="83" height="78" rx="8" fill="#008000"/><line x1="47" y1="236" x2="109.0" y2="236.0" stroke="#000" stroke-width="4"/><polygon points="116.0,236.0 104.0,242.5 110.0,236.0 104.0,229.5" fill="#000"/><line x1="177" y1="237" x2="234.0" y2="237.0" stroke="#000" stroke-width="4"/><polygon points="241.0,237.0 229.0,243.5 235.0,237.0 229.0,230.5" fill="#000"/><line x1="319" y1="222" x2="380.0" y2="222.0" stroke="#000" stroke-width="4"/><polygon points="387.0,222.0 375.0,228.5 381.0,222.0 375.0,215.5" fill="#000"/><line x1="387" y1="253" x2="332.0" y2="253.0" stroke="#000" stroke-width="4"/><polygon points="325.0,253.0 337.0,246.5 331.0,253.0 337.0,259.5" fill="#000"/><line x1="277" y1="184" x2="270.4" y2="199.5" stroke="#000" stroke-width="4"/><polygon points="268.0,205.0 266.8,192.5 270.0,200.4 277.8,197.3" fill="#000"/><line x1="303" y1="205" x2="294.9" y2="190.3" stroke="#000" stroke-width="4"/><polygon points="292.0,185.0 302.6,191.7 294.4,189.4 292.0,197.5" fill="#000"/></svg><div style="position:absolute;font-family:'Liberation Serif',serif;font-style:italic;font-size:12px;line-height:1;color:#5a4632;white-space:nowrap;left:47px;top:207.5px;letter-spacing:0.2px">Sensory Input</div><div style="position:absolute;font-family:'Liberation Serif',serif;font-style:italic;font-size:12px;line-height:1;color:#5a4632;white-space:nowrap;left:181px;top:217px;letter-spacing:0.1px">Attention</div><div style="position:absolute;font-family:'Liberation Serif',serif;font-style:italic;font-size:12px;line-height:1;color:#5a4632;white-space:nowrap;left:257px;top:169px;letter-spacing:0.2px">Rehearsal</div><div style="position:absolute;font-family:'Liberation Serif',serif;font-style:italic;font-size:12px;line-height:1;color:#5a4632;white-space:nowrap;left:329px;top:208.3px;letter-spacing:0.1px">Storage</div><div style="position:absolute;font-family:'Liberation Serif',serif;font-style:italic;font-size:12px;line-height:1;color:#5a4632;white-space:nowrap;left:340px;top:256px;letter-spacing:0.1px">Retrieval</div><div style="position:absolute;font-family:'Liberation Sans',sans-serif;font-weight:bold;font-size:9px;line-height:11px;color:#fff;white-space:nowrap;text-align:center;letter-spacing:0.7px;text-shadow:1px 1px 0 #222;-webkit-text-stroke:0.35px #fff;left:111px;width:80px;top:227px">Sensory<br>memory</div><div style="position:absolute;font-family:'Liberation Sans',sans-serif;font-weight:bold;font-size:9px;line-height:11px;color:#fff;white-space:nowrap;text-align:center;letter-spacing:0.7px;text-shadow:1px 1px 0 #222;-webkit-text-stroke:0.35px #fff;left:242.5px;width:80px;top:227px">Short-term<br>memory</div><div style="position:absolute;font-family:'Liberation Sans',sans-serif;font-weight:bold;font-size:9px;line-height:11px;color:#fff;white-space:nowrap;text-align:center;letter-spacing:0.7px;text-shadow:1px 1px 0 #222;-webkit-text-stroke:0.35px #fff;left:391.5px;width:80px;top:227px">Long-term<br>memory</div></div></div><div class="a t" style="left:20px;top:329.5px;font-size:10.5px;-webkit-text-stroke:0.35px #707070;color:#707070;width:15px;text-align:right">12</div><div class="a" style="left:40px;top:330px;width:115px;height:87px;background:#a4acb4"></div><div class="a" style="left:39px;top:329px;width:115px;height:87px;background:#fbfbfb"></div><div class="a" style="left:40px;top:330px;width:113px;height:85px;overflow:hidden"><div style="position:absolute;left:0;top:0;width:530px;height:398px;transform:scale(0.2132,0.2136);transform-origin:0 0"><div style="position:absolute;left:0;top:0;width:530px;height:398px;background-color:#56412c;background-image:radial-gradient(circle at 4px 4px,#655039 1.5px,rgba(0,0,0,0) 3px),radial-gradient(circle at 0 0,#503d29 1.5px,rgba(0,0,0,0) 2.5px);background-size:7px 7px;"></div><div style="position:absolute;left:11px;top:12px;width:507px;height:373px;background:#cfb458;box-shadow:0 0 0 1px #4a3922;"></div><div style="position:absolute;left:12px;top:13px;width:505px;height:371px;background:#e2cd74;"></div><div style="position:absolute;left:16px;top:17px;width:497px;height:363px;background-color:#f2f2f0;background-image:linear-gradient(to top,rgba(238,222,148,0.8),rgba(240,226,160,0.3) 28px,rgba(240,226,160,0) 70px),linear-gradient(to right,rgba(238,222,148,0.7),rgba(240,226,160,0.25) 22px,rgba(240,226,160,0) 55px),linear-gradient(to left,rgba(238,222,148,0.7),rgba(240,226,160,0.25) 22px,rgba(240,226,160,0) 55px),linear-gradient(to bottom,rgba(238,222,148,0.6),rgba(240,226,160,0.2) 20px,rgba(240,226,160,0) 45px);box-shadow:inset 0 0 10px 3px rgba(238,222,148,0.85)"></div><div style="position:absolute;left:24px;top:24px;width:483px;height:349px;border:1px solid rgba(200,190,150,0.6);border-top-color:rgba(200,190,150,0.35);border-radius:30px 30px 2px 2px;box-sizing:border-box"></div><div style="position:absolute;left:24px;top:104px;width:483px;height:3px;background:#dcd5b6;border-bottom:1px solid #e9e4cc"></div><svg style="position:absolute;left:0;top:0" width="530" height="398" viewBox="0 0 530 398"><g transform="translate(24,24)"><g fill="none" stroke="#c4bfae" stroke-width="1.1"><ellipse cx="40" cy="14" rx="7.5" ry="11" transform="rotate(-18 40 14)"/><path d="M2 5 C 8 -1, 22 1, 24 10 C 26 20, 14 24, 10 16 C 7 10, 16 6, 20 12"/><path d="M3 19 C 14 17, 26 17, 38 21"/><path d="M5 24 C 16 22, 26 22, 34 26"/><path d="M14 3 C 12 20, 12 40, 14 56"/><path d="M19 5 C 18 20, 18 36, 20 50"/><path d="M3 46 C 6 37, 22 38, 22 46 C 22 54, 8 54, 8 46"/><path d="M13 56 C 11 64, 8 70, 6 78"/><path d="M24 28 C 30 28, 32 36, 27 38 C 23 38, 22 33, 26 32"/><path d="M33 3 C 42 -1, 52 0, 70 0"/></g></g><g transform="translate(507,24) scale(-1,1)"><g fill="none" stroke="#c4bfae" stroke-width="1.1"><ellipse cx="40" cy="14" rx="7.5" ry="11" transform="rotate(-18 40 14)"/><path d="M2 5 C 8 -1, 22 1, 24 10 C 26 20, 14 24, 10 16 C 7 10, 16 6, 20 12"/><path d="M3 19 C 14 17, 26 17, 38 21"/><path d="M5 24 C 16 22, 26 22, 34 26"/><path d="M14 3 C 12 20, 12 40, 14 56"/><path d="M19 5 C 18 20, 18 36, 20 50"/><path d="M3 46 C 6 37, 22 38, 22 46 C 22 54, 8 54, 8 46"/><path d="M13 56 C 11 64, 8 70, 6 78"/><path d="M24 28 C 30 28, 32 36, 27 38 C 23 38, 22 33, 26 32"/><path d="M33 3 C 42 -1, 52 0, 70 0"/></g></g></svg><div style="position:absolute;left:111.0px;top:50px;width:302px;text-align:center;font-family:'Liberation Sans',sans-serif;font-size:33px;line-height:1;color:#a0502f;white-space:nowrap">Short-Term Memory</div><div style="position:absolute;left:72px;top:169px;width:404px;height:24px;overflow:hidden;font-family:'Liberation Sans',sans-serif;font-weight:bold;font-size:21px;line-height:24px;color:#3a2812;white-space:nowrap">Temporary storage for information and data in the working memory system of the brain used for </div><div style="position:absolute;left:50px;top:176px;width:10px;height:10px;background:#d4a017"></div><div style="position:absolute;left:72px;top:207px;width:186px;height:24px;overflow:hidden;font-family:'Liberation Sans',sans-serif;font-weight:bold;font-size:21px;line-height:24px;color:#3a2812;white-space:nowrap">Temporary storage for information and data in the working memory system of the brain used for </div><div style="position:absolute;left:50px;top:214px;width:10px;height:10px;background:#d4a017"></div><div style="position:absolute;left:72px;top:242px;width:377px;height:24px;overflow:hidden;font-family:'Liberation Sans',sans-serif;font-weight:bold;font-size:21px;line-height:24px;color:#3a2812;white-space:nowrap">Temporary storage for information and data in the working memory system of the brain used for </div><div style="position:absolute;left:50px;top:249px;width:10px;height:10px;background:#d4a017"></div><div style="position:absolute;left:74px;top:267px;width:302px;height:24px;overflow:hidden;font-family:'Liberation Sans',sans-serif;font-weight:bold;font-size:21px;line-height:24px;color:#3a2812;white-space:nowrap">Temporary storage for information and data in the working memory system of the brain used for </div></div></div><svg class="a" style="left:19px;top:405px" width="16" height="11" viewBox="0 0 16 11"><path d="M10.5 1.5 L14.5 5.5 L10.5 9.5 L6.5 5.5 Z" fill="#6a70f0" stroke="#111" stroke-width="1"/><rect x="2" y="4" width="1.5" height="1.2" fill="#666"/><rect x="4" y="2" width="1.5" height="1.2" fill="#888"/><rect x="3" y="7" width="1.5" height="1.2" fill="#777"/></svg><div class="a t" style="left:20px;top:432.5px;font-size:10.5px;-webkit-text-stroke:0.35px #707070;color:#707070;width:15px;text-align:right">13</div><div class="a" style="left:40px;top:433px;width:115px;height:87px;background:#a4acb4"></div><div class="a" style="left:39px;top:432px;width:115px;height:87px;background:#fbfbfb"></div><div class="a" style="left:40px;top:433px;width:113px;height:85px;overflow:hidden"><div style="position:absolute;left:0;top:0;width:530px;height:398px;transform:scale(0.2132,0.2136);transform-origin:0 0"><div style="position:absolute;left:0;top:0;width:530px;height:398px;background-color:#56412c;background-image:radial-gradient(circle at 4px 4px,#655039 1.5px,rgba(0,0,0,0) 3px),radial-gradient(circle at 0 0,#503d29 1.5px,rgba(0,0,0,0) 2.5px);background-size:7px 7px;"></div><div style="position:absolute;left:11px;top:12px;width:507px;height:373px;background:#cfb458;box-shadow:0 0 0 1px #4a3922;"></div><div style="position:absolute;left:12px;top:13px;width:505px;height:371px;background:#e2cd74;"></div><div style="position:absolute;left:16px;top:17px;width:497px;height:363px;background-color:#f2f2f0;background-image:linear-gradient(to top,rgba(238,222,148,0.8),rgba(240,226,160,0.3) 28px,rgba(240,226,160,0) 70px),linear-gradient(to right,rgba(238,222,148,0.7),rgba(240,226,160,0.25) 22px,rgba(240,226,160,0) 55px),linear-gradient(to left,rgba(238,222,148,0.7),rgba(240,226,160,0.25) 22px,rgba(240,226,160,0) 55px),linear-gradient(to bottom,rgba(238,222,148,0.6),rgba(240,226,160,0.2) 20px,rgba(240,226,160,0) 45px);box-shadow:inset 0 0 10px 3px rgba(238,222,148,0.85)"></div><div style="position:absolute;left:24px;top:24px;width:483px;height:349px;border:1px solid rgba(200,190,150,0.6);border-top-color:rgba(200,190,150,0.35);border-radius:30px 30px 2px 2px;box-sizing:border-box"></div><div style="position:absolute;left:24px;top:104px;width:483px;height:3px;background:#dcd5b6;border-bottom:1px solid #e9e4cc"></div><svg style="position:absolute;left:0;top:0" width="530" height="398" viewBox="0 0 530 398"><g transform="translate(24,24)"><g fill="none" stroke="#c4bfae" stroke-width="1.1"><ellipse cx="40" cy="14" rx="7.5" ry="11" transform="rotate(-18 40 14)"/><path d="M2 5 C 8 -1, 22 1, 24 10 C 26 20, 14 24, 10 16 C 7 10, 16 6, 20 12"/><path d="M3 19 C 14 17, 26 17, 38 21"/><path d="M5 24 C 16 22, 26 22, 34 26"/><path d="M14 3 C 12 20, 12 40, 14 56"/><path d="M19 5 C 18 20, 18 36, 20 50"/><path d="M3 46 C 6 37, 22 38, 22 46 C 22 54, 8 54, 8 46"/><path d="M13 56 C 11 64, 8 70, 6 78"/><path d="M24 28 C 30 28, 32 36, 27 38 C 23 38, 22 33, 26 32"/><path d="M33 3 C 42 -1, 52 0, 70 0"/></g></g><g transform="translate(507,24) scale(-1,1)"><g fill="none" stroke="#c4bfae" stroke-width="1.1"><ellipse cx="40" cy="14" rx="7.5" ry="11" transform="rotate(-18 40 14)"/><path d="M2 5 C 8 -1, 22 1, 24 10 C 26 20, 14 24, 10 16 C 7 10, 16 6, 20 12"/><path d="M3 19 C 14 17, 26 17, 38 21"/><path d="M5 24 C 16 22, 26 22, 34 26"/><path d="M14 3 C 12 20, 12 40, 14 56"/><path d="M19 5 C 18 20, 18 36, 20 50"/><path d="M3 46 C 6 37, 22 38, 22 46 C 22 54, 8 54, 8 46"/><path d="M13 56 C 11 64, 8 70, 6 78"/><path d="M24 28 C 30 28, 32 36, 27 38 C 23 38, 22 33, 26 32"/><path d="M33 3 C 42 -1, 52 0, 70 0"/></g></g></svg><div style="position:absolute;left:112.0px;top:50px;width:300px;text-align:center;font-family:'Liberation Sans',sans-serif;font-size:33px;line-height:1;color:#a0502f;white-space:nowrap">Short-Term memory</div><div style="position:absolute;left:72px;top:137px;width:321px;height:24px;overflow:hidden;font-family:'Liberation Sans',sans-serif;font-weight:bold;font-size:21px;line-height:24px;color:#3a2812;white-space:nowrap">Temporary storage for information and data in the working memory system of the brain used for </div><div style="position:absolute;left:50px;top:144px;width:10px;height:10px;background:#d4a017"></div><div style="position:absolute;left:72px;top:174px;width:130px;height:24px;overflow:hidden;font-family:'Liberation Sans',sans-serif;font-weight:bold;font-size:21px;line-height:24px;color:#3a2812;white-space:nowrap">Temporary storage for information and data in the working memory system of the brain used for </div><div style="position:absolute;left:50px;top:181px;width:10px;height:10px;background:#d4a017"></div><div style="position:absolute;left:95px;top:208px;width:93px;height:24px;overflow:hidden;font-family:'Liberation Sans',sans-serif;font-weight:bold;font-size:21px;line-height:24px;color:#3a2812;white-space:nowrap">Temporary storage for information and data in the working memory system of the brain used for </div><div style="position:absolute;left:71px;top:215px;width:10px;height:10px;background:#d4a017"></div><div style="position:absolute;left:95px;top:247px;width:144px;height:24px;overflow:hidden;font-family:'Liberation Sans',sans-serif;font-weight:bold;font-size:21px;line-height:24px;color:#3a2812;white-space:nowrap">Temporary storage for information and data in the working memory system of the brain used for </div><div style="position:absolute;left:71px;top:254px;width:10px;height:10px;background:#d4a017"></div><div style="position:absolute;left:72px;top:281px;width:409px;height:24px;overflow:hidden;font-family:'Liberation Sans',sans-serif;font-weight:bold;font-size:21px;line-height:24px;color:#3a2812;white-space:nowrap">Temporary storage for information and data in the working memory system of the brain used for </div><div style="position:absolute;left:50px;top:288px;width:10px;height:10px;background:#d4a017"></div><div style="position:absolute;left:72px;top:307px;width:116px;height:24px;overflow:hidden;font-family:'Liberation Sans',sans-serif;font-weight:bold;font-size:21px;line-height:24px;color:#3a2812;white-space:nowrap">Temporary storage for information and data in the working memory system of the brain used for </div></div></div><div class="a t" style="left:20px;top:535.5px;font-size:10.5px;-webkit-text-stroke:0.35px #707070;color:#707070;width:15px;text-align:right">14</div><div class="a" style="left:40px;top:536px;width:115px;height:87px;background:#a4acb4"></div><div class="a" style="left:39px;top:535px;width:115px;height:87px;background:#fbfbfb"></div><div class="a" style="left:40px;top:536px;width:113px;height:85px;overflow:hidden"><div style="position:absolute;left:0;top:0;width:530px;height:398px;transform:scale(0.2132,0.2136);transform-origin:0 0"><div style="position:absolute;left:0;top:0;width:530px;height:398px;background-color:#56412c;background-image:radial-gradient(circle at 4px 4px,#655039 1.5px,rgba(0,0,0,0) 3px),radial-gradient(circle at 0 0,#503d29 1.5px,rgba(0,0,0,0) 2.5px);background-size:7px 7px;"></div><div style="position:absolute;left:11px;top:12px;width:507px;height:373px;background:#cfb458;box-shadow:0 0 0 1px #4a3922;"></div><div style="position:absolute;left:12px;top:13px;width:505px;height:371px;background:#e2cd74;"></div><div style="position:absolute;left:16px;top:17px;width:497px;height:363px;background-color:#f2f2f0;background-image:linear-gradient(to top,rgba(238,222,148,0.8),rgba(240,226,160,0.3) 28px,rgba(240,226,160,0) 70px),linear-gradient(to right,rgba(238,222,148,0.7),rgba(240,226,160,0.25) 22px,rgba(240,226,160,0) 55px),linear-gradient(to left,rgba(238,222,148,0.7),rgba(240,226,160,0.25) 22px,rgba(240,226,160,0) 55px),linear-gradient(to bottom,rgba(238,222,148,0.6),rgba(240,226,160,0.2) 20px,rgba(240,226,160,0) 45px);box-shadow:inset 0 0 10px 3px rgba(238,222,148,0.85)"></div><div style="position:absolute;left:24px;top:24px;width:483px;height:349px;border:1px solid rgba(200,190,150,0.6);border-top-color:rgba(200,190,150,0.35);border-radius:30px 30px 2px 2px;box-sizing:border-box"></div><div style="position:absolute;left:24px;top:104px;width:483px;height:3px;background:#dcd5b6;border-bottom:1px solid #e9e4cc"></div><svg style="position:absolute;left:0;top:0" width="530" height="398" viewBox="0 0 530 398"><g transform="translate(24,24)"><g fill="none" stroke="#c4bfae" stroke-width="1.1"><ellipse cx="40" cy="14" rx="7.5" ry="11" transform="rotate(-18 40 14)"/><path d="M2 5 C 8 -1, 22 1, 24 10 C 26 20, 14 24, 10 16 C 7 10, 16 6, 20 12"/><path d="M3 19 C 14 17, 26 17, 38 21"/><path d="M5 24 C 16 22, 26 22, 34 26"/><path d="M14 3 C 12 20, 12 40, 14 56"/><path d="M19 5 C 18 20, 18 36, 20 50"/><path d="M3 46 C 6 37, 22 38, 22 46 C 22 54, 8 54, 8 46"/><path d="M13 56 C 11 64, 8 70, 6 78"/><path d="M24 28 C 30 28, 32 36, 27 38 C 23 38, 22 33, 26 32"/><path d="M33 3 C 42 -1, 52 0, 70 0"/></g></g><g transform="translate(507,24) scale(-1,1)"><g fill="none" stroke="#c4bfae" stroke-width="1.1"><ellipse cx="40" cy="14" rx="7.5" ry="11" transform="rotate(-18 40 14)"/><path d="M2 5 C 8 -1, 22 1, 24 10 C 26 20, 14 24, 10 16 C 7 10, 16 6, 20 12"/><path d="M3 19 C 14 17, 26 17, 38 21"/><path d="M5 24 C 16 22, 26 22, 34 26"/><path d="M14 3 C 12 20, 12 40, 14 56"/><path d="M19 5 C 18 20, 18 36, 20 50"/><path d="M3 46 C 6 37, 22 38, 22 46 C 22 54, 8 54, 8 46"/><path d="M13 56 C 11 64, 8 70, 6 78"/><path d="M24 28 C 30 28, 32 36, 27 38 C 23 38, 22 33, 26 32"/><path d="M33 3 C 42 -1, 52 0, 70 0"/></g></g></svg><div style="position:absolute;left:108.5px;top:50px;width:307px;text-align:center;font-family:'Liberation Sans',sans-serif;font-size:33px;line-height:1;color:#a0502f;white-space:nowrap">Long-Term Memory</div><div style="position:absolute;left:68px;top:195px;width:386px;height:24px;overflow:hidden;font-family:'Liberation Sans',sans-serif;font-weight:bold;font-size:21px;line-height:24px;color:#3a2812;white-space:nowrap">Temporary storage for information and data in the working memory system of the brain used for </div><div style="position:absolute;left:46px;top:202px;width:10px;height:10px;background:#d4a017"></div><div style="position:absolute;left:68px;top:216px;width:116px;height:24px;overflow:hidden;font-family:'Liberation Sans',sans-serif;font-weight:bold;font-size:21px;line-height:24px;color:#3a2812;white-space:nowrap">Temporary storage for information and data in the working memory system of the brain used for </div></div></div></div></div>
<div class="a " style="left:181px;top:98px;width:1px;height:511px;background:#d0d0d0"></div>
<div class="a " style="left:183px;top:98px;width:1px;height:511px;background:#e5e5e5"></div>
<svg class="a" style="left:183px;top:338px;" width="5" height="22" viewBox="0 0 5 22"><path d="M3.5 0.5 L0.5 3 L3.5 5.5 Z" fill="#555"/><rect x="1.5" y="8" width="1.5" height="1.2" fill="#777"/><rect x="1.5" y="11" width="1.5" height="1.2" fill="#777"/><rect x="1.5" y="14" width="1.5" height="1.2" fill="#777"/><rect x="1.5" y="17" width="1.5" height="1.2" fill="#777"/></svg>
<svg class="a" style="left:752px;top:310px;" width="5" height="22" viewBox="0 0 5 22"><path d="M0.5 0.5 L3.5 3 L0.5 5.5 Z" fill="#555"/><rect x="1.5" y="8" width="1.5" height="1.2" fill="#777"/><rect x="1.5" y="11" width="1.5" height="1.2" fill="#777"/><rect x="1.5" y="14" width="1.5" height="1.2" fill="#777"/><rect x="1.5" y="17" width="1.5" height="1.2" fill="#777"/></svg>
<div class="a " style="left:188px;top:98px;width:564px;height:511px;background:#f0f0f0"></div>
<div class="a " style="left:188px;top:122px;width:548px;height:473px;background:#ababab;border-left:1px solid #7c7c7c;border-top:1px solid #888;box-sizing:border-box"></div>
<div class="a " style="left:189px;top:123px;width:2px;height:472px;background:linear-gradient(90deg,#959595,#ababab)"></div>
<div class="a " style="left:188px;top:122px;width:548px;height:1px;background:#fafafa"></div>
<div class="a " style="left:194px;top:102px;width:42px;height:21px;background:#fff;border:1px solid #b8b8b8;border-bottom:none;box-sizing:border-box"></div>
<div class="a " style="left:194px;top:109px;width:42px;height:10px;text-align:center;line-height:10px;font-size:10px"><span style="font-weight:bold;color:#000">Normal</span></div>
<div class="a " style="left:236px;top:104px;width:38px;height:18px;background:#ececec;border:1px solid #a8a8a8;border-bottom:none;box-sizing:border-box"></div>
<div class="a " style="left:236px;top:109px;width:38px;height:10px;text-align:center;line-height:10px;font-size:10px"><span style="color:#111">Outline</span></div>
<div class="a " style="left:274px;top:104px;width:34px;height:18px;background:#ececec;border:1px solid #a8a8a8;border-bottom:none;box-sizing:border-box"></div>
<div class="a " style="left:274px;top:109px;width:34px;height:10px;text-align:center;line-height:10px;font-size:10px"><span style="color:#111">Notes</span></div>
<div class="a " style="left:308px;top:104px;width:45px;height:18px;background:#ececec;border:1px solid #a8a8a8;border-bottom:none;box-sizing:border-box"></div>
<div class="a " style="left:308px;top:109px;width:45px;height:10px;text-align:center;line-height:10px;font-size:10px"><span style="color:#111">Handout</span></div>
<div class="a " style="left:353px;top:104px;width:61px;height:18px;background:#ececec;border:1px solid #a8a8a8;border-bottom:none;box-sizing:border-box"></div>
<div class="a " style="left:353px;top:109px;width:61px;height:10px;text-align:center;line-height:10px;font-size:10px"><span style="color:#111">Slide Sorter</span></div>
<div class="a " style="left:198px;top:160px;width:530px;height:398px;box-shadow:1px 3px 4px rgba(0,0,0,0.45)"></div>
<div class="a" style="left:198px;top:160px;width:530px;height:398px;overflow:hidden"><div style="position:absolute;left:0;top:0;width:530px;height:398px;background-color:#56412c;background-image:radial-gradient(circle at 4px 4px,#655039 1.5px,rgba(0,0,0,0) 3px),radial-gradient(circle at 0 0,#503d29 1.5px,rgba(0,0,0,0) 2.5px);background-size:7px 7px;"></div><div style="position:absolute;left:11px;top:12px;width:507px;height:373px;background:#cfb458;box-shadow:0 0 0 1px #4a3922;"></div><div style="position:absolute;left:12px;top:13px;width:505px;height:371px;background:#e2cd74;"></div><div style="position:absolute;left:16px;top:17px;width:497px;height:363px;background-color:#f2f2f0;background-image:linear-gradient(to top,rgba(238,222,148,0.8),rgba(240,226,160,0.3) 28px,rgba(240,226,160,0) 70px),linear-gradient(to right,rgba(238,222,148,0.7),rgba(240,226,160,0.25) 22px,rgba(240,226,160,0) 55px),linear-gradient(to left,rgba(238,222,148,0.7),rgba(240,226,160,0.25) 22px,rgba(240,226,160,0) 55px),linear-gradient(to bottom,rgba(238,222,148,0.6),rgba(240,226,160,0.2) 20px,rgba(240,226,160,0) 45px);box-shadow:inset 0 0 10px 3px rgba(238,222,148,0.85)"></div><div style="position:absolute;left:24px;top:24px;width:483px;height:349px;border:1px solid rgba(200,190,150,0.6);border-top-color:rgba(200,190,150,0.35);border-radius:30px 30px 2px 2px;box-sizing:border-box"></div><div style="position:absolute;left:24px;top:104px;width:483px;height:3px;background:#dcd5b6;border-bottom:1px solid #e9e4cc"></div><svg style="position:absolute;left:0;top:0" width="530" height="398" viewBox="0 0 530 398"><g transform="translate(24,24)"><g fill="none" stroke="#c4bfae" stroke-width="1.1"><ellipse cx="40" cy="14" rx="7.5" ry="11" transform="rotate(-18 40 14)"/><path d="M2 5 C 8 -1, 22 1, 24 10 C 26 20, 14 24, 10 16 C 7 10, 16 6, 20 12"/><path d="M3 19 C 14 17, 26 17, 38 21"/><path d="M5 24 C 16 22, 26 22, 34 26"/><path d="M14 3 C 12 20, 12 40, 14 56"/><path d="M19 5 C 18 20, 18 36, 20 50"/><path d="M3 46 C 6 37, 22 38, 22 46 C 22 54, 8 54, 8 46"/><path d="M13 56 C 11 64, 8 70, 6 78"/><path d="M24 28 C 30 28, 32 36, 27 38 C 23 38, 22 33, 26 32"/><path d="M33 3 C 42 -1, 52 0, 70 0"/></g></g><g transform="translate(507,24) scale(-1,1)"><g fill="none" stroke="#c4bfae" stroke-width="1.1"><ellipse cx="40" cy="14" rx="7.5" ry="11" transform="rotate(-18 40 14)"/><path d="M2 5 C 8 -1, 22 1, 24 10 C 26 20, 14 24, 10 16 C 7 10, 16 6, 20 12"/><path d="M3 19 C 14 17, 26 17, 38 21"/><path d="M5 24 C 16 22, 26 22, 34 26"/><path d="M14 3 C 12 20, 12 40, 14 56"/><path d="M19 5 C 18 20, 18 36, 20 50"/><path d="M3 46 C 6 37, 22 38, 22 46 C 22 54, 8 54, 8 46"/><path d="M13 56 C 11 64, 8 70, 6 78"/><path d="M24 28 C 30 28, 32 36, 27 38 C 23 38, 22 33, 26 32"/><path d="M33 3 C 42 -1, 52 0, 70 0"/></g></g></svg><div style="position:absolute;left:103.5px;top:48.3px;font-family:'Liberation Sans',sans-serif;font-size:35px;line-height:1;color:#a0502f;white-space:nowrap;letter-spacing:1.2px">A model of Memory</div><svg style="position:absolute;left:0;top:0;overflow:visible" width="530" height="398" viewBox="0 0 530 398"><rect x="125" y="211" width="52" height="52" rx="6" fill="#4b0082"/><rect x="249" y="205" width="67" height="63" fill="#fb8d1a"/><rect x="390" y="198" width="83" height="78" rx="8" fill="#008000"/><line x1="47" y1="236" x2="109.0" y2="236.0" stroke="#000" stroke-width="4"/><polygon points="116.0,236.0 104.0,242.5 110.0,236.0 104.0,229.5" fill="#000"/><line x1="177" y1="237" x2="234.0" y2="237.0" stroke="#000" stroke-width="4"/><polygon points="241.0,237.0 229.0,243.5 235.0,237.0 229.0,230.5" fill="#000"/><line x1="319" y1="222" x2="380.0" y2="222.0" stroke="#000" stroke-width="4"/><polygon points="387.0,222.0 375.0,228.5 381.0,222.0 375.0,215.5" fill="#000"/><line x1="387" y1="253" x2="332.0" y2="253.0" stroke="#000" stroke-width="4"/><polygon points="325.0,253.0 337.0,246.5 331.0,253.0 337.0,259.5" fill="#000"/><line x1="277" y1="184" x2="270.4" y2="199.5" stroke="#000" stroke-width="4"/><polygon points="268.0,205.0 266.8,192.5 270.0,200.4 277.8,197.3" fill="#000"/><line x1="303" y1="205" x2="294.9" y2="190.3" stroke="#000" stroke-width="4"/><polygon points="292.0,185.0 302.6,191.7 294.4,189.4 292.0,197.5" fill="#000"/></svg><div style="position:absolute;font-family:'Liberation Serif',serif;font-style:italic;font-size:12px;line-height:1;color:#5a4632;white-space:nowrap;left:47px;top:207.5px;letter-spacing:0.2px">Sensory Input</div><div style="position:absolute;font-family:'Liberation Serif',serif;font-style:italic;font-size:12px;line-height:1;color:#5a4632;white-space:nowrap;left:181px;top:217px;letter-spacing:0.1px">Attention</div><div style="position:absolute;font-family:'Liberation Serif',serif;font-style:italic;font-size:12px;line-height:1;color:#5a4632;white-space:nowrap;left:257px;top:169px;letter-spacing:0.2px">Rehearsal</div><div style="position:absolute;font-family:'Liberation Serif',serif;font-style:italic;font-size:12px;line-height:1;color:#5a4632;white-space:nowrap;left:329px;top:208.3px;letter-spacing:0.1px">Storage</div><div style="position:absolute;font-family:'Liberation Serif',serif;font-style:italic;font-size:12px;line-height:1;color:#5a4632;white-space:nowrap;left:340px;top:256px;letter-spacing:0.1px">Retrieval</div><div style="position:absolute;font-family:'Liberation Sans',sans-serif;font-weight:bold;font-size:9px;line-height:11px;color:#fff;white-space:nowrap;text-align:center;letter-spacing:0.7px;text-shadow:1px 1px 0 #222;-webkit-text-stroke:0.35px #fff;left:111px;width:80px;top:227px">Sensory<br>memory</div><div style="position:absolute;font-family:'Liberation Sans',sans-serif;font-weight:bold;font-size:9px;line-height:11px;color:#fff;white-space:nowrap;text-align:center;letter-spacing:0.7px;text-shadow:1px 1px 0 #222;-webkit-text-stroke:0.35px #fff;left:242.5px;width:80px;top:227px">Short-term<br>memory</div><div style="position:absolute;font-family:'Liberation Sans',sans-serif;font-weight:bold;font-size:9px;line-height:11px;color:#fff;white-space:nowrap;text-align:center;letter-spacing:0.7px;text-shadow:1px 1px 0 #222;-webkit-text-stroke:0.35px #fff;left:391.5px;width:80px;top:227px">Long-term<br>memory</div><svg style="position:absolute;left:0;top:0;overflow:visible" width="530" height="398" viewBox="0 0 530 398"><rect x="279.0" y="201.5" width="7" height="7" fill="#3fdcdc" stroke="#1a4a4a" stroke-width="1"/><rect x="312.5" y="201.5" width="7" height="7" fill="#3fdcdc" stroke="#1a4a4a" stroke-width="1"/><rect x="245.5" y="233.0" width="7" height="7" fill="#3fdcdc" stroke="#1a4a4a" stroke-width="1"/><rect x="312.5" y="233.0" width="7" height="7" fill="#3fdcdc" stroke="#1a4a4a" stroke-width="1"/><rect x="245.5" y="264.5" width="7" height="7" fill="#3fdcdc" stroke="#1a4a4a" stroke-width="1"/><rect x="279.0" y="264.5" width="7" height="7" fill="#3fdcdc" stroke="#1a4a4a" stroke-width="1"/><rect x="312.5" y="264.5" width="7" height="7" fill="#3fdcdc" stroke="#1a4a4a" stroke-width="1"/><circle cx="249" cy="205" r="4" fill="#c8e83c" stroke="#2a3a10" stroke-width="1"/></svg></div>
<div class="a " style="left:736px;top:122px;width:15px;height:473px;background:#f0f0f0"></div>
<div class="a " style="left:737px;top:228px;width:13px;height:262px;background:#cdcdcd"></div>
<svg class="a" style="left:739px;top:128px;" width="9" height="6" viewBox="0 0 9 6"><path d="M1 5 L4.5 1.5 L8 5" stroke="#333" stroke-width="1.4" fill="none"/></svg>
<svg class="a" style="left:739px;top:586px;" width="9" height="6" viewBox="0 0 9 6"><path d="M1 1 L4.5 4.5 L8 1" stroke="#333" stroke-width="1.4" fill="none"/></svg>
<div class="a " style="left:188px;top:595px;width:548px;height:14px;background:#f0f0f0"></div>
<div class="a " style="left:374px;top:596px;width:177px;height:12px;background:#cdcdcd"></div>
<svg class="a" style="left:193px;top:598px;" width="6" height="9" viewBox="0 0 6 9"><path d="M5 1 L1.5 4.5 L5 8" stroke="#333" stroke-width="1.4" fill="none"/></svg>
<svg class="a" style="left:726px;top:598px;" width="6" height="9" viewBox="0 0 6 9"><path d="M1 1 L4.5 4.5 L1 8" stroke="#333" stroke-width="1.4" fill="none"/></svg>
<div class="a " style="left:751px;top:98px;width:1px;height:511px;background:#d8d8d8"></div>
<div class="a " style="left:756px;top:98px;width:1px;height:511px;background:#c8c8c8"></div>
<div class="a " style="left:757px;top:98px;width:236px;height:511px;background:#f0f0f0"></div>
<div class="a " style="left:760px;top:98px;width:199px;height:511px;background:#efefef"></div>
<div class="a " style="left:7px;top:609px;width:986px;height:28px;background:#f4f5f7;border-top:1px solid #d9d9d9;border-bottom:1px solid #c9c9c9;box-sizing:border-box"></div>
<div class="a " style="left:7px;top:637px;width:986px;height:18px;background:#f0f0f0"></div>
<div class="a " style="left:759px;top:98px;width:1px;height:511px;background:#e2e2e2"></div>
<div class="a t " style="left:769px;top:109.2px;font-size:10px;font-weight:bold;color:#111;-webkit-text-stroke:0;letter-spacing:-0.15px">Properties</div>
<svg class="a" style="left:947px;top:108px" width="9" height="9" viewBox="0 0 9 9"><path d="M1 1 L8 8 M8 1 L1 8" stroke="#3d4650" stroke-width="1.4"/></svg>
<div class="a " style="left:760px;top:124px;width:199px;height:23px;background:linear-gradient(#dcdcdc,#ececec 70%,#efefef)"></div>
<div class="a " style="left:765px;top:132px;width:8px;height:8px;background:linear-gradient(#fff,#dde3ea);border:1px solid #7a8794;box-sizing:border-box"></div>
<div class="a " style="left:767px;top:135px;width:4px;height:1px;background:#222"></div>
<div class="a " style="left:768px;top:134px;width:1px;height:3px;background:#222"></div>
<div class="a t " style="left:777px;top:132px;font-size:10px;font-weight:bold;color:#111;-webkit-text-stroke:0;letter-spacing:-0.3px">Text</div>
<svg class="a" style="left:945px;top:129px" width="10" height="10" viewBox="0 0 10 10"><rect x="0.5" y="0.5" width="9" height="9" fill="#fff" stroke="#7b96c4"/><rect x="1" y="1" width="8" height="2" fill="#8fb0e0"/><path d="M2.5 6.5 H3.5 M4.5 6.5 H5.5 M6.5 6.5 H7.5" stroke="#333" stroke-width="1"/></svg>
<div class="a " style="left:760px;top:147px;width:199px;height:23px;background:linear-gradient(#dcdcdc,#ececec 70%,#efefef)"></div>
<div class="a " style="left:765px;top:155px;width:8px;height:8px;background:linear-gradient(#fff,#dde3ea);border:1px solid #7a8794;box-sizing:border-box"></div>
<div class="a " style="left:767px;top:158px;width:4px;height:1px;background:#222"></div>
<div class="a " style="left:768px;top:157px;width:1px;height:3px;background:#222"></div>
<div class="a t " style="left:777px;top:155px;font-size:10px;font-weight:bold;color:#111;-webkit-text-stroke:0;letter-spacing:-0.3px">Paragraph</div>
<svg class="a" style="left:945px;top:152px" width="10" height="10" viewBox="0 0 10 10"><rect x="0.5" y="0.5" width="9" height="9" fill="#fff" stroke="#7b96c4"/><rect x="1" y="1" width="8" height="2" fill="#8fb0e0"/><path d="M2.5 6.5 H3.5 M4.5 6.5 H5.5 M6.5 6.5 H7.5" stroke="#333" stroke-width="1"/></svg>
<div class="a " style="left:760px;top:170px;width:199px;height:23px;background:linear-gradient(#dcdcdc,#ececec 70%,#efefef)"></div>
<div class="a " style="left:765px;top:178px;width:8px;height:8px;background:linear-gradient(#fff,#dde3ea);border:1px solid #7a8794;box-sizing:border-box"></div>
<div class="a " style="left:767px;top:181px;width:4px;height:1px;background:#222"></div>
<div class="a t " style="left:777px;top:178px;font-size:10px;font-weight:bold;color:#111;-webkit-text-stroke:0;letter-spacing:-0.3px">Area</div>
<svg class="a" style="left:945px;top:175px" width="10" height="10" viewBox="0 0 10 10"><rect x="0.5" y="0.5" width="9" height="9" fill="#fff" stroke="#7b96c4"/><rect x="1" y="1" width="8" height="2" fill="#8fb0e0"/><path d="M2.5 6.5 H3.5 M4.5 6.5 H5.5 M6.5 6.5 H7.5" stroke="#333" stroke-width="1"/></svg>
<div class="a t " style="left:766px;top:196.2px;font-size:10px;color:#111"><u>F</u>ill:</div>
<div class="a " style="left:766px;top:212px;width:91px;height:20px;background:#fff;border:1px solid #a9adb3;box-sizing:border-box"></div>
<div class="a " style="left:842px;top:213px;width:14px;height:18px;background:linear-gradient(#f0f0f0,#dcdcdc);border-left:1px solid #b8b8b8;box-sizing:border-box"></div>
<svg class="a" style="left:845px;top:220px" width="9" height="6" viewBox="0 0 9 6"><path d="M1 1 L4.5 4.5 L8 1" fill="none" stroke="#222" stroke-width="1.5"/></svg>
<div class="a t " style="left:769px;top:219px;font-size:10px;color:#111;">Color</div>
<div class="a " style="left:862px;top:211px;width:84px;height:21px;background:#f7f7f7;border:1px solid #e6e6e6;box-sizing:border-box"></div>
<svg class="a" style="left:869px;top:216px" width="12" height="11" viewBox="0 0 12 11"><path d="M1 5.5 L5.5 1 L10 5.5 L5.5 10 Z" fill="#fff" stroke="#3c64a8" stroke-width="1.2"/><path d="M3 6 L5.5 3.5 L8 6 L5.5 8.5Z" fill="#8fb2e6"/><path d="M7 2 C 10 2, 12 4, 11 8" fill="none" stroke="#222" stroke-width="1.3"/></svg>
<div class="a " style="left:883px;top:216px;width:48px;height:11px;background:#ff8c00;border:1px solid #5f86c0;box-sizing:border-box;border-radius:1px"></div>
<svg class="a" style="left:937px;top:220px" width="5" height="3" viewBox="0 0 5 3"><path d="M0 0 H5 L2.5 3 Z" fill="#111"/></svg>
<div class="a t " style="left:766px;top:239.7px;font-size:10px;color:#111"><u>T</u>ransparency:</div>
<div class="a " style="left:766px;top:256px;width:91px;height:20px;background:#fff;border:1px solid #a9adb3;box-sizing:border-box"></div>
<div class="a " style="left:842px;top:257px;width:14px;height:18px;background:linear-gradient(#f0f0f0,#dcdcdc);border-left:1px solid #b8b8b8;box-sizing:border-box"></div>
<svg class="a" style="left:845px;top:264px" width="9" height="6" viewBox="0 0 9 6"><path d="M1 1 L4.5 4.5 L8 1" fill="none" stroke="#222" stroke-width="1.5"/></svg>
<div class="a t " style="left:769px;top:263px;font-size:10px;color:#111;">None</div>
<div class="a " style="left:862px;top:256px;width:91px;height:20px;background:#fff;border:1px solid #a9adb3;box-sizing:border-box"></div>
<div class="a " style="left:938px;top:258px;width:13px;height:16px;background:linear-gradient(#f4f4f4,#e0e0e0);border:1px solid #c4c4c4;box-sizing:border-box"></div>
<div class="a " style="left:939px;top:266px;width:11px;height:1px;background:#c4c4c4"></div>
<svg class="a" style="left:941px;top:261px" width="7" height="4" viewBox="0 0 7 4"><path d="M0 3.5 L3.5 0 L7 3.5 Z" fill="#222"/></svg>
<svg class="a" style="left:941px;top:268px" width="7" height="4" viewBox="0 0 7 4"><path d="M0 0 L7 0 L3.5 3.5 Z" fill="#222"/></svg>
<div class="a t " style="left:865px;top:263px;font-size:10px;color:#111">0%</div>
<div class="a " style="left:760px;top:283px;width:199px;height:23px;background:linear-gradient(#dcdcdc,#ececec 70%,#efefef)"></div>
<div class="a " style="left:765px;top:291px;width:8px;height:8px;background:linear-gradient(#fff,#dde3ea);border:1px solid #7a8794;box-sizing:border-box"></div>
<div class="a " style="left:767px;top:294px;width:4px;height:1px;background:#222"></div>
<div class="a t " style="left:777px;top:291px;font-size:10px;font-weight:bold;color:#111;-webkit-text-stroke:0;letter-spacing:-0.3px">Line</div>
<svg class="a" style="left:945px;top:288px" width="10" height="10" viewBox="0 0 10 10"><rect x="0.5" y="0.5" width="9" height="9" fill="#fff" stroke="#7b96c4"/><rect x="1" y="1" width="8" height="2" fill="#8fb0e0"/><path d="M2.5 6.5 H3.5 M4.5 6.5 H5.5 M6.5 6.5 H7.5" stroke="#333" stroke-width="1"/></svg>
<div class="a t " style="left:766px;top:309.5px;font-size:10px;color:#111"><u>W</u>idth:</div>
<div class="a " style="left:767px;top:323px;width:84px;height:21px;background:#f7f7f7;border:1px solid #ececec;box-sizing:border-box"></div>
<div class="a " style="left:770px;top:332px;width:64px;height:1px;background:#111"></div>
<svg class="a" style="left:840px;top:331px" width="5" height="3" viewBox="0 0 5 3"><path d="M0 0 H5 L2.5 3 Z" fill="#111"/></svg>
<div class="a t " style="left:863px;top:309.5px;font-size:10px;color:#111"><u>C</u>olor:</div>
<div class="a " style="left:863px;top:323px;width:83px;height:21px;background:#f7f7f7;border:1px solid #ececec;box-sizing:border-box"></div>
<svg class="a" style="left:866px;top:326px" width="12" height="14" viewBox="0 0 12 14"><path d="M1 11 L3 7 L9.5 0.5 L11.5 2.5 L5 9 Z" fill="#f6c63a" stroke="#a9741a" stroke-width="0.8"/><path d="M1 13 H11" stroke="#2a5aa8" stroke-width="1.4"/></svg>
<div class="a " style="left:878px;top:327px;width:54px;height:11px;background:#808080;border:1px solid #5f86c0;box-sizing:border-box"></div>
<svg class="a" style="left:939px;top:331px" width="5" height="3" viewBox="0 0 5 3"><path d="M0 0 H5 L2.5 3 Z" fill="#111"/></svg>
<div class="a t " style="left:766px;top:355px;font-size:10px;color:#111"><u>S</u>tyle:</div>
<div class="a " style="left:766px;top:370px;width:91px;height:20px;background:#fff;border:1px solid #a9adb3;box-sizing:border-box"></div>
<div class="a " style="left:842px;top:371px;width:14px;height:18px;background:linear-gradient(#f0f0f0,#dcdcdc);border-left:1px solid #b8b8b8;box-sizing:border-box"></div>
<svg class="a" style="left:845px;top:378px" width="9" height="6" viewBox="0 0 9 6"><path d="M1 1 L4.5 4.5 L8 1" fill="none" stroke="#222" stroke-width="1.5"/></svg>
<div class="a t " style="left:769px;top:377px;font-size:10px;color:#111;">- none -</div>
<div class="a t " style="left:863px;top:355px;font-size:10px;color:#111"><u>T</u>ransparency:</div>
<div class="a " style="left:862px;top:370px;width:91px;height:20px;background:#fff;border:1px solid #a9adb3;box-sizing:border-box"></div>
<div class="a " style="left:938px;top:372px;width:13px;height:16px;background:linear-gradient(#f4f4f4,#e0e0e0);border:1px solid #c4c4c4;box-sizing:border-box"></div>
<div class="a " style="left:939px;top:380px;width:11px;height:1px;background:#c4c4c4"></div>
<svg class="a" style="left:941px;top:375px" width="7" height="4" viewBox="0 0 7 4"><path d="M0 3.5 L3.5 0 L7 3.5 Z" fill="#222"/></svg>
<svg class="a" style="left:941px;top:382px" width="7" height="4" viewBox="0 0 7 4"><path d="M0 0 L7 0 L3.5 3.5 Z" fill="#222"/></svg>
<div class="a t " style="left:865px;top:377px;font-size:10px;color:#111">0%</div>
<div class="a t " style="left:766px;top:401.4px;font-size:10px;color:#111"><u>A</u>rrow:</div>
<div class="a " style="left:766px;top:415px;width:91px;height:20px;background:#fff;border:1px solid #a9adb3;box-sizing:border-box"></div>
<div class="a " style="left:842px;top:416px;width:14px;height:18px;background:linear-gradient(#f0f0f0,#dcdcdc);border-left:1px solid #b8b8b8;box-sizing:border-box"></div>
<svg class="a" style="left:845px;top:423px" width="9" height="6" viewBox="0 0 9 6"><path d="M1 1 L4.5 4.5 L8 1" fill="none" stroke="#222" stroke-width="1.5"/></svg>
<div class="a t " style="left:769px;top:422px;font-size:10px;color:#111;">- none -</div>
<div class="a " style="left:862px;top:415px;width:91px;height:20px;background:#fff;border:1px solid #a9adb3;box-sizing:border-box"></div>
<div class="a " style="left:938px;top:416px;width:14px;height:18px;background:linear-gradient(#f0f0f0,#dcdcdc);border-left:1px solid #b8b8b8;box-sizing:border-box"></div>
<svg class="a" style="left:941px;top:423px" width="9" height="6" viewBox="0 0 9 6"><path d="M1 1 L4.5 4.5 L8 1" fill="none" stroke="#222" stroke-width="1.5"/></svg>
<div class="a t " style="left:865px;top:422px;font-size:10px;color:#111;">- none -</div>
<div class="a t " style="left:766px;top:447.2px;font-size:10px;color:#111"><u>C</u>orner style</div>
<div class="a t " style="left:863px;top:447.2px;font-size:10px;color:#111">Ca<u>p</u> style</div>
<div class="a " style="left:766px;top:461px;width:91px;height:20px;background:#fff;border:1px solid #a9adb3;box-sizing:border-box"></div>
<div class="a " style="left:842px;top:462px;width:14px;height:18px;background:linear-gradient(#f0f0f0,#dcdcdc);border-left:1px solid #b8b8b8;box-sizing:border-box"></div>
<svg class="a" style="left:845px;top:469px" width="9" height="6" viewBox="0 0 9 6"><path d="M1 1 L4.5 4.5 L8 1" fill="none" stroke="#222" stroke-width="1.5"/></svg>
<div class="a t " style="left:769px;top:468px;font-size:10px;color:#111;">Rounded</div>
<div class="a " style="left:862px;top:461px;width:91px;height:20px;background:#fff;border:1px solid #a9adb3;box-sizing:border-box"></div>
<div class="a " style="left:938px;top:462px;width:14px;height:18px;background:linear-gradient(#f0f0f0,#dcdcdc);border-left:1px solid #b8b8b8;box-sizing:border-box"></div>
<svg class="a" style="left:941px;top:469px" width="9" height="6" viewBox="0 0 9 6"><path d="M1 1 L4.5 4.5 L8 1" fill="none" stroke="#222" stroke-width="1.5"/></svg>
<div class="a t " style="left:865px;top:468px;font-size:10px;color:#111;">Flat</div>
<div class="a " style="left:760px;top:489px;width:199px;height:23px;background:linear-gradient(#dcdcdc,#ececec 70%,#efefef)"></div>
<div class="a " style="left:765px;top:497px;width:8px;height:8px;background:linear-gradient(#fff,#dde3ea);border:1px solid #7a8794;box-sizing:border-box"></div>
<div class="a " style="left:767px;top:500px;width:4px;height:1px;background:#222"></div>
<div class="a " style="left:768px;top:499px;width:1px;height:3px;background:#222"></div>
<div class="a t " style="left:777px;top:497px;font-size:10px;font-weight:bold;color:#111;-webkit-text-stroke:0;letter-spacing:-0.3px">Position and Size</div>
<svg class="a" style="left:945px;top:494px" width="10" height="10" viewBox="0 0 10 10"><rect x="0.5" y="0.5" width="9" height="9" fill="#fff" stroke="#7b96c4"/><rect x="1" y="1" width="8" height="2" fill="#8fb0e0"/><path d="M2.5 6.5 H3.5 M4.5 6.5 H5.5 M6.5 6.5 H7.5" stroke="#333" stroke-width="1"/></svg>
<div class="a " style="left:760px;top:512px;width:199px;height:1px;background:#e6e6e6"></div>
<div class="a " style="left:760px;top:607px;width:199px;height:1px;background:#d8d8d8"></div>
<div class="a " style="left:959px;top:98px;width:1px;height:511px;background:#e4e4e4"></div>
<svg class="a" style="left:972px;top:108px" width="10" height="11" viewBox="0 0 10 11"><path d="M0 1 H7 M0 3.5 H7 M0 6 H7" stroke="#333" stroke-width="1.2"/><path d="M4 7.5 H10 L7 10.5 Z" fill="#222"/></svg>
<div class="a " style="left:963px;top:134px;width:27px;height:28px;background:#f6f6f6;border:1px solid #c6c6c6;border-radius:3px;box-sizing:border-box"></div>
<svg class="a" style="left:967px;top:137px" width="20" height="20" viewBox="0 0 20 20"><path d="M1 6 L5 4 L9 6 L5 8 Z" fill="#9ad8ff"/><path d="M1 6 L5 8 V13 L1 11 Z" fill="#3aa0f0"/><path d="M9 6 L5 8 V13 L9 11 Z" fill="#1a7ad8"/><path d="M1 12 L5 10 L9 12 L5 14 Z" fill="#9ad8ff"/><path d="M1 12 L5 14 V19 L1 17 Z" fill="#3aa0f0"/><path d="M9 12 L5 14 V19 L9 17 Z" fill="#1a7ad8"/><path d="M9 4 L13 2 L17 4 L13 6 Z" fill="#c8f08a"/><path d="M9 4 L13 6 V11 L9 9 Z" fill="#7ad428"/><path d="M17 4 L13 6 V11 L17 9 Z" fill="#5ab010"/><path d="M9 10 L13 8 L17 10 L13 12 Z" fill="#c8f08a"/><path d="M9 10 L13 12 V17 L9 15 Z" fill="#7ad428"/><path d="M17 10 L13 12 V17 L17 15 Z" fill="#5ab010"/><path d="M5 13 L9 11 L13 13 L9 15 Z" fill="#c8f08a"/><path d="M5 13 L9 15 V20 L5 18 Z" fill="#7ad428"/><path d="M13 13 L9 15 V20 L13 18 Z" fill="#5ab010"/></svg>
<svg class="a" style="left:967px;top:168px" width="20" height="20" viewBox="0 0 20 20"><rect x="1" y="1" width="17" height="14" fill="#f4f6f8" stroke="#5a7ab0"/><rect x="1" y="1" width="17" height="3" fill="#5a8ad0"/><rect x="4" y="7" width="3" height="10" fill="#2a6ad8"/><rect x="8.5" y="7" width="3" height="10" fill="#f0a020"/><rect x="13" y="7" width="3" height="10" fill="#30c040"/></svg>
<svg class="a" style="left:966px;top:197px" width="20" height="20" viewBox="0 0 20 20"><path d="M9 1 L11.5 7 L18 7.3 L13 11.3 L14.8 17.8 L9 14 L3.2 17.8 L5 11.3 L0 7.3 L6.5 7 Z" fill="#f9c83a" stroke="#d89018" stroke-width="1"/><path d="M15 3 H19 M16 5 H19" stroke="#f0a050" stroke-width="0.8"/></svg>
<svg class="a" style="left:967px;top:225px" width="20" height="20" viewBox="0 0 20 20"><rect x="1" y="2" width="9" height="12" fill="#fff" stroke="#7a8490"/><rect x="8" y="5" width="10" height="12" fill="#eef4fa" stroke="#7a8490"/><path d="M3 9 H11 M8 6.5 L11 9 L8 11.5" stroke="#2a78d0" stroke-width="1.8" fill="none"/><path d="M11 15 L14 11 L17 15 Z" fill="#40b040"/></svg>
<svg class="a" style="left:966px;top:256px" width="20" height="20" viewBox="0 0 20 20"><path d="M4 8 C 8 4, 14 6, 13 12 L 6 18 Z" fill="#1a3a80"/><path d="M9 10 C 12 8, 16 10, 15 14 L10 17Z" fill="#30a060"/><circle cx="3" cy="9" r="2" fill="#e0409a"/><circle cx="10" cy="2.5" r="2" fill="#a040e0"/><path d="M16 1 L17 3.5 L19.5 3.5 L17.5 5 L18.3 7.5 L16 6 L13.7 7.5 L14.5 5 L12.5 3.5 L15 3.5Z" fill="#f9c83a"/><circle cx="5" cy="4" r="2" fill="#e06a20"/></svg>
<svg class="a" style="left:967px;top:285px" width="20" height="20" viewBox="0 0 20 20"><path d="M1 6 L14 1 L19 13 L6 18 Z" fill="#f4f8fc" stroke="#7a8490"/><path d="M3 7 L13 3 L17 12 L7 16 Z" fill="#6ab8f0"/><path d="M7 16 L10 10 L13 13 L17 12Z" fill="#40b040"/><path d="M8 10 L11 7 L13 9" fill="#fff"/></svg>
<svg class="a" style="left:966px;top:315px" width="20" height="20" viewBox="0 0 20 20"><circle cx="10" cy="10" r="8.5" fill="#fff" stroke="#f0a020" stroke-width="2.4"/><path d="M13.5 5 L10.8 10.8 L9.2 9.2Z" fill="#2a6ad8"/><path d="M6.5 15 L9.2 9.2 L10.8 10.8Z" fill="#e83030"/><text x="10" y="6" font-size="4" text-anchor="middle" fill="#222" font-family="Liberation Sans">N</text></svg>
<div class="a " style="left:991px;top:98px;width:1px;height:511px;background:#d6d6d6"></div>
<div class="a" style="left:10px;top:615px;width:2px;height:1px;background:#7a7a7a"></div><div class="a" style="left:10px;top:618px;width:2px;height:1px;background:#7a7a7a"></div><div class="a" style="left:10px;top:621px;width:2px;height:1px;background:#7a7a7a"></div><div class="a" style="left:10px;top:624px;width:2px;height:1px;background:#7a7a7a"></div><div class="a" style="left:10px;top:627px;width:2px;height:1px;background:#7a7a7a"></div><div class="a" style="left:10px;top:630px;width:2px;height:1px;background:#7a7a7a"></div>
<div class="a" style="left:17px;top:612px;width:21px;height:23px;background:#c5dcf5;border:1px solid #8db6e6;box-sizing:border-box"></div>
<svg class="a" style="left:20px;top:615px" width="16" height="16" viewBox="0 0 16 16"><path d="M2 1 L2 13 L5 10 L7.5 15 L9.5 14 L7 9 L11 9 Z" fill="#fff" stroke="#222" stroke-width="1.1" stroke-linejoin="round"/></svg>
<svg class="a" style="left:48px;top:617px" width="16" height="16" viewBox="0 0 16 16"><path d="M1 13 L13 1" stroke="#2a72d0" stroke-width="1.8"/></svg>
<svg class="a" style="left:70px;top:619px" width="16" height="16" viewBox="0 0 16 16"><path d="M0 4.5 H11 M7 0.8 L11.5 4.5 L7 8.2" fill="none" stroke="#2a72d0" stroke-width="1.8"/></svg>
<svg class="a" style="left:90px;top:619px" width="16" height="16" viewBox="0 0 16 16"><rect x="0.5" y="0.5" width="13" height="8" fill="#5aa0f0" stroke="#1a5ab0"/><rect x="1.5" y="1.5" width="11" height="2.5" fill="#9ac8fa"/></svg>
<svg class="a" style="left:111px;top:619px" width="16" height="16" viewBox="0 0 16 16"><ellipse cx="7.5" cy="5" rx="7" ry="4.5" fill="#5aa0f0" stroke="#1a5ab0"/><ellipse cx="7.5" cy="3.5" rx="5" ry="2" fill="#9ac8fa"/></svg>
<svg class="a" style="left:134px;top:616px" width="16" height="16" viewBox="0 0 16 16"><text x="5.5" y="13" text-anchor="middle" font-family="Liberation Serif" font-weight="bold" font-size="16" fill="#1f4e8a">T</text></svg>
<svg class="a" style="left:160px;top:616px" width="16" height="16" viewBox="0 0 16 16"><path d="M0.5 9 C 3 6, 4 13, 7 11 C 9 10, 10 14, 14 12" fill="none" stroke="#2a72d0" stroke-width="1.4"/><path d="M5 10 L12 2 L14 4 L7 12 L4.5 12.5 Z" fill="#f6c63a" stroke="#a9741a" stroke-width="0.8"/><path d="M12 2 L13 1 L15 3 L14 4 Z" fill="#e06070"/></svg>
<svg class="a" style="left:190px;top:617px" width="16" height="16" viewBox="0 0 16 16"><path d="M3 3 C 6 3, 5 10, 8 10 L 11 10" fill="none" stroke="#2a72d0" stroke-width="1.6"/><circle cx="2.5" cy="2.5" r="2.2" fill="#5aa0f0" stroke="#1a5ab0" stroke-width="0.8"/><circle cx="11.5" cy="10" r="2.2" fill="#5aa0f0" stroke="#1a5ab0" stroke-width="0.8"/></svg>
<svg class="a" style="left:220px;top:616px" width="16" height="16" viewBox="0 0 16 16"><path d="M7 0.5 L13.5 7 L7 13.5 L0.5 7 Z" fill="#5aa0f0" stroke="#1a5ab0"/><path d="M7 2 L11 6 H3 Z" fill="#9ac8fa"/></svg>
<svg class="a" style="left:251px;top:616px" width="16" height="16" viewBox="0 0 16 16"><circle cx="7" cy="7" r="6.5" fill="#5aa0f0" stroke="#1a5ab0"/><circle cx="4.8" cy="5.5" r="0.9" fill="#1a3a70"/><circle cx="9.2" cy="5.5" r="0.9" fill="#1a3a70"/><path d="M3.8 8.5 C 5 10.5, 9 10.5, 10.2 8.5" fill="none" stroke="#1a3a70" stroke-width="0.9"/></svg>
<svg class="a" style="left:281px;top:618px" width="16" height="16" viewBox="0 0 16 16"><path d="M0.5 5 L4.5 1 V3.5 H8.5 V1 L12.5 5 L8.5 9 V6.5 H4.5 V9 Z" fill="#5aa0f0" stroke="#1a5ab0" stroke-width="0.9"/></svg>
<svg class="a" style="left:312px;top:617px" width="16" height="16" viewBox="0 0 16 16"><rect x="0.5" y="0.5" width="12" height="12" fill="#5aa0f0" stroke="#1a5ab0"/><path d="M3 1 V12" stroke="#1a5ab0"/><path d="M4 3 H12 M4 6 H12 M4 9 H12" stroke="#9ac8fa"/></svg>
<svg class="a" style="left:342px;top:616px" width="16" height="16" viewBox="0 0 16 16"><path d="M1.5 0.5 H12.5 A1 1 0 0 1 13.5 1.5 V8.5 A1 1 0 0 1 12.5 9.5 H6 L2.5 13 L3.5 9.5 H1.5 A1 1 0 0 1 0.5 8.5 V1.5 A1 1 0 0 1 1.5 0.5 Z" fill="#5aa0f0" stroke="#1a5ab0"/></svg>
<svg class="a" style="left:372px;top:616px" width="16" height="16" viewBox="0 0 16 16"><path d="M7 0.5 L8.9 5.2 L13.8 5.4 L10 8.6 L11.3 13.5 L7 10.8 L2.7 13.5 L4 8.6 L0.2 5.4 L5.1 5.2 Z" fill="#4a90e8" stroke="#1a5ab0" stroke-width="0.8"/></svg>
<svg class="a" style="left:410px;top:617px" width="16" height="16" viewBox="0 0 16 16"><path d="M3 2 L11 1.5 L8 8 L12.5 12 L2.5 12 Z" fill="none" stroke="#1a5ab0" stroke-width="1.2"/><rect x="1.5" y="0.5" width="3" height="3" fill="#2a72d0"/><rect x="9.5" y="0.0" width="3" height="3" fill="#2a72d0"/><rect x="6.5" y="6.5" width="3" height="3" fill="#2a72d0"/><rect x="11.0" y="10.5" width="3" height="3" fill="#2a72d0"/><rect x="1.0" y="10.5" width="3" height="3" fill="#2a72d0"/></svg>
<svg class="a" style="left:433px;top:616px" width="16" height="16" viewBox="0 0 16 16"><path d="M1 13 L5 9" stroke="#3a6ab0" stroke-width="1.5"/><path d="M4 10 L11 2 L13.5 4.5 L6 11.5 Z" fill="#f5b62a" stroke="#a9741a" stroke-width="0.8"/></svg>
<svg class="a" style="left:460px;top:616px" width="16" height="16" viewBox="0 0 16 16"><rect x="0.5" y="3.5" width="13" height="10" fill="#f8d068" stroke="#8a4a10" stroke-width="1.2"/><rect x="2.5" y="5.5" width="9" height="6" fill="#dfe8f0"/><text x="7" y="11" text-anchor="middle" font-family="Liberation Sans" font-weight="bold" font-size="6.5" fill="#1a3a80">A</text><path d="M4 3.5 L7 0.5 L10 3.5" fill="none" stroke="#8a4a10"/></svg>
<svg class="a" style="left:481px;top:616px" width="16" height="16" viewBox="0 0 16 16"><rect x="0.5" y="5.5" width="8" height="8" fill="#e8501a" stroke="#9a2a08"/><circle cx="10" cy="5" r="4.5" fill="#f5a21a" stroke="#a06010"/><path d="M5 13.5 L9.5 6.5 L14 13.5 Z" fill="#4a90e8" stroke="#1a5ab0"/></svg>
<svg class="a" style="left:503px;top:616px" width="16" height="16" viewBox="0 0 16 16"><rect x="0.5" y="3.5" width="13" height="10" fill="#c8862a" stroke="#7a4a10"/><rect x="2.5" y="5.5" width="9" height="6" fill="#8ad0f0"/><path d="M2.5 11.5 L6 8 L9 10 L11.5 8.5 V11.5 Z" fill="#3aa040"/><path d="M4 3.5 L7 0.5 L10 3.5" fill="none" stroke="#7a4a10"/></svg>
<svg class="a" style="left:530px;top:616px" width="16" height="16" viewBox="0 0 16 16"><path d="M11 4 A 5 5 0 1 0 12 9" fill="none" stroke="#2a5a90" stroke-width="3.4"/><path d="M11 4 A 5 5 0 1 0 12 9" fill="none" stroke="#7ab0e0" stroke-width="1.8"/><path d="M7.5 1.5 L13.5 1 L12.5 7 Z" fill="#7ab0e0" stroke="#2a5a90" stroke-width="0.8"/></svg>
<svg class="a" style="left:550px;top:616px" width="16" height="16" viewBox="0 0 16 16"><rect x="0.5" y="0.5" width="13" height="13" fill="#fff" stroke="#9aa0a6"/><path d="M1 1 V13" stroke="#30b030" stroke-width="2"/><rect x="3" y="5" width="3" height="4" fill="#3a8ae0"/><path d="M13 7 H7.5 M9.5 5 L7.5 7 L9.5 9" fill="none" stroke="#e04020" stroke-width="1.5"/></svg>
<svg class="a" style="left:581px;top:616px" width="16" height="16" viewBox="0 0 16 16"><rect x="0.5" y="4.5" width="9" height="9" fill="#3a78c8" stroke="#1a3a80"/><rect x="4.5" y="0.5" width="9" height="9" fill="#f6c63a" stroke="#a9741a"/></svg>
<svg class="a" style="left:619px;top:616px" width="16" height="16" viewBox="0 0 16 16"><rect x="5" y="4" width="8" height="8" fill="#5aa0f0" stroke="#1a5ab0"/><rect x="0.5" y="0.5" width="6" height="6" fill="#3a78c8" stroke="#1a3a80"/><path d="M3 6 L7 10 L3 13" fill="none" stroke="#e0501a" stroke-width="1.6"/></svg>
<svg class="a" style="left:640px;top:616px" width="16" height="16" viewBox="0 0 16 16"><path d="M1 3 L5 7 M5 3 L1 7 M3 2 V8 M0.5 5 H5.5" stroke="#f59a3a" stroke-width="1.1"/><path d="M2 9 L6 13" stroke="#f59a3a" stroke-width="1.1"/><rect x="7.5" y="0.5" width="6" height="6" fill="#5aa0f0" stroke="#1a5ab0"/><path d="M8 6 L8 14 L10 12 L11.5 15 L12.5 14.5 L11 11.5 L13.5 11.5 Z" fill="#fff" stroke="#222" stroke-width="0.8"/></svg>
<div class="a" style="left:41px;top:616px;width:1px;height:15px;background:#d2d4d8"></div>
<div class="a" style="left:153px;top:616px;width:1px;height:15px;background:#d2d4d8"></div>
<div class="a" style="left:403px;top:616px;width:1px;height:15px;background:#d2d4d8"></div>
<div class="a" style="left:452px;top:616px;width:1px;height:15px;background:#d2d4d8"></div>
<div class="a" style="left:523px;top:616px;width:1px;height:15px;background:#d2d4d8"></div>
<div class="a" style="left:612px;top:616px;width:1px;height:15px;background:#d2d4d8"></div>
<svg class="a" style="left:180px;top:622px" width="5" height="3" viewBox="0 0 5 3"><path d="M0 0 H5 L2.5 3 Z" fill="#111"/></svg>
<svg class="a" style="left:210px;top:622px" width="5" height="3" viewBox="0 0 5 3"><path d="M0 0 H5 L2.5 3 Z" fill="#111"/></svg>
<svg class="a" style="left:241px;top:622px" width="5" height="3" viewBox="0 0 5 3"><path d="M0 0 H5 L2.5 3 Z" fill="#111"/></svg>
<svg class="a" style="left:271px;top:622px" width="5" height="3" viewBox="0 0 5 3"><path d="M0 0 H5 L2.5 3 Z" fill="#111"/></svg>
<svg class="a" style="left:301px;top:622px" width="5" height="3" viewBox="0 0 5 3"><path d="M0 0 H5 L2.5 3 Z" fill="#111"/></svg>
<svg class="a" style="left:332px;top:622px" width="5" height="3" viewBox="0 0 5 3"><path d="M0 0 H5 L2.5 3 Z" fill="#111"/></svg>
<svg class="a" style="left:363px;top:622px" width="5" height="3" viewBox="0 0 5 3"><path d="M0 0 H5 L2.5 3 Z" fill="#111"/></svg>
<svg class="a" style="left:393px;top:622px" width="5" height="3" viewBox="0 0 5 3"><path d="M0 0 H5 L2.5 3 Z" fill="#111"/></svg>
<svg class="a" style="left:570px;top:622px" width="5" height="3" viewBox="0 0 5 3"><path d="M0 0 H5 L2.5 3 Z" fill="#111"/></svg>
<svg class="a" style="left:601px;top:622px" width="5" height="3" viewBox="0 0 5 3"><path d="M0 0 H5 L2.5 3 Z" fill="#111"/></svg>
<div class="a" style="left:662px;top:611px;width:9px;height:23px;background:linear-gradient(#f2f2f2,#9c9c9c)"></div><svg class="a" style="left:664px;top:627px" width="5" height="3" viewBox="0 0 5 3"><path d="M0 0 H5 L2.5 3 Z" fill="#111"/></svg>
<div class="a " style="left:672px;top:610px;width:1px;height:26px;background:#dcdee2"></div>
<div class="a " style="left:7px;top:637px;width:986px;height:1px;background:#dadada"></div>
<div class="a t " style="left:15px;top:644px;font-size:10px;color:#222">Shape 'AutoShape 3' selected</div>
<div class="a " style="left:356px;top:640px;width:1px;height:14px;background:#c8c8c8"></div>
<div class="a " style="left:542px;top:640px;width:1px;height:14px;background:#c8c8c8"></div>
<div class="a " style="left:556px;top:640px;width:1px;height:14px;background:#c8c8c8"></div>
<div class="a " style="left:581px;top:640px;width:1px;height:14px;background:#c8c8c8"></div>
<div class="a " style="left:640px;top:640px;width:1px;height:14px;background:#c8c8c8"></div>
<div class="a " style="left:841px;top:640px;width:1px;height:14px;background:#c8c8c8"></div>
<div class="a " style="left:962px;top:640px;width:1px;height:14px;background:#c8c8c8"></div>
<svg class="a" style="left:362px;top:641px" width="12" height="11" viewBox="0 0 12 11"><path d="M0.5 3.5 H3 M1.5 0.5 V6" stroke="#2a5aa8"/><rect x="3.5" y="3.5" width="8" height="6" fill="none" stroke="#555" stroke-dasharray="1.5 1"/></svg>
<div class="a t " style="left:379px;top:643.5px;font-size:10px;color:#222">6.69 / 5.51</div>
<svg class="a" style="left:452px;top:641px" width="12" height="11" viewBox="0 0 12 11"><path d="M0.5 1 V4 M0.5 6 V9" stroke="#555"/><rect x="3.5" y="1.5" width="7" height="8" fill="none" stroke="#555" stroke-dasharray="1.5 1"/></svg>
<div class="a t " style="left:469px;top:643.5px;font-size:10px;color:#222">1.78 x 1.67</div>
<div class="a t " style="left:546px;top:643.5px;font-size:10px;color:#444">*</div>
<div class="a t " style="left:583px;top:643.5px;font-size:10px;color:#222">Slide 11 / 46</div>
<div class="a t " style="left:644px;top:643.5px;font-size:10px;color:#222">Title2</div>
<svg class="a" style="left:846px;top:642px" width="10" height="10" viewBox="0 0 10 10"><circle cx="5" cy="5" r="4.5" fill="#c8d8ec" stroke="#3a5a88"/><path d="M2.5 5 H7.5" stroke="#1a3a70" stroke-width="1.2"/></svg>
<div class="a " style="left:859px;top:647px;width:82px;height:1px;background:#8a8a8a"></div>
<div class="a " style="left:899px;top:642px;width:1px;height:10px;background:repeating-linear-gradient(#8a8a8a 0 3px,transparent 3px 4px)"></div>
<svg class="a" style="left:871px;top:643px" width="9" height="9" viewBox="0 0 9 9"><circle cx="4.5" cy="4.5" r="3.3" fill="#6a90bc" stroke="#2a4a78"/></svg>
<svg class="a" style="left:946px;top:642px" width="10" height="10" viewBox="0 0 10 10"><circle cx="5" cy="5" r="4.5" fill="#c8d8ec" stroke="#3a5a88"/><path d="M2.5 5 H7.5 M5 2.5 V7.5" stroke="#1a3a70" stroke-width="1.2"/></svg>
<div class="a t " style="left:965px;top:643.5px;font-size:10px;color:#222">46%</div>
</body></html>
